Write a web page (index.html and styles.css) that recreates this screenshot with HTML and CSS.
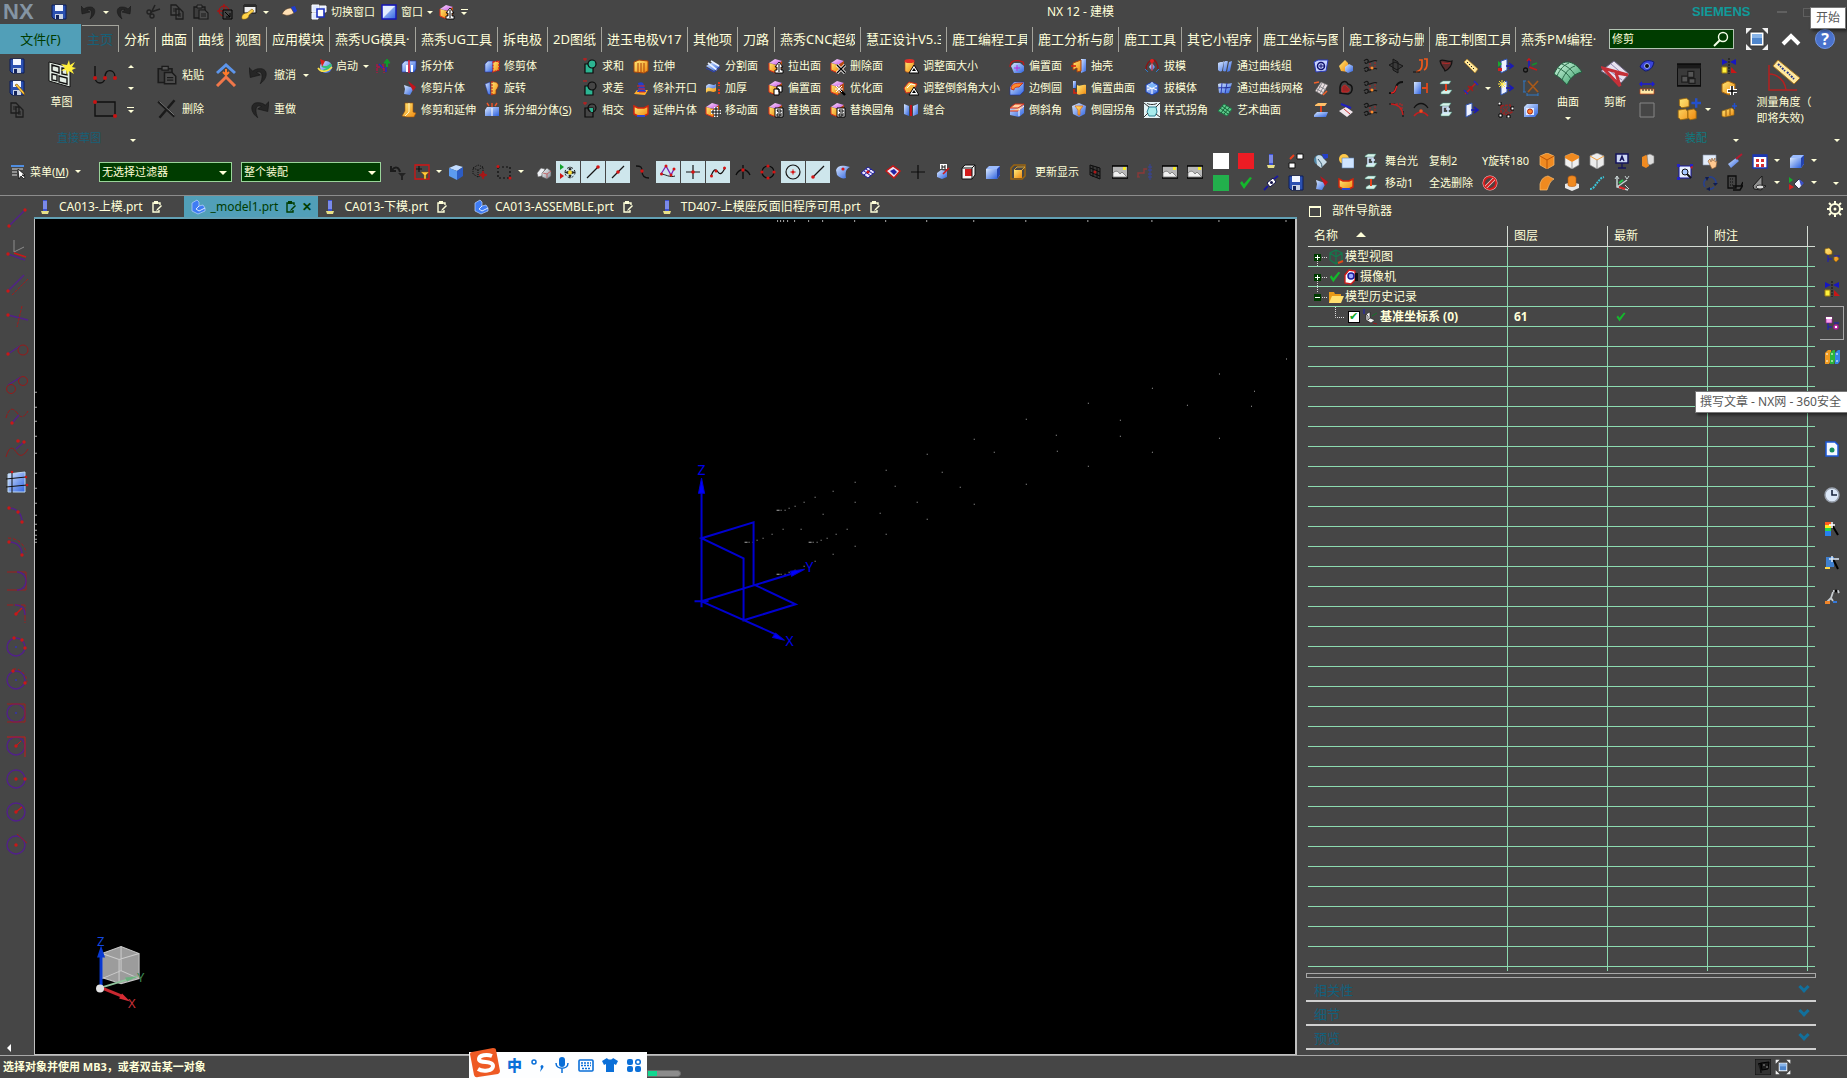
FILE: index.html
```html
<!DOCTYPE html>
<html lang="zh-CN">
<head>
    <meta charset="UTF-8">
    <meta name="viewport" content="width=device-width, initial-scale=1.0">
    <title>NX 12 - 建模</title>
    <link rel="stylesheet" href="styles.css">
</head>
<body>
    <!-- icones -->
    <svg class="defs" aria-hidden="true">
        <defs>
            <linearGradient id="gBlue" x1="0" y1="0" x2="1" y2="1"><stop offset="0" stop-color="#d8e8ff"/><stop offset="1" stop-color="#2e62e0"/></linearGradient>
            <linearGradient id="gGold" x1="0" y1="0" x2="1" y2="1"><stop offset="0" stop-color="#ffe978"/><stop offset="1" stop-color="#f08a10"/></linearGradient>
            <linearGradient id="gPink" x1="0" y1="0" x2="1" y2="1"><stop offset="0" stop-color="#ffe0ff"/><stop offset="1" stop-color="#c050e0"/></linearGradient>
            <linearGradient id="gGreen" x1="0" y1="0" x2="1" y2="1"><stop offset="0" stop-color="#d8fbe6"/><stop offset="1" stop-color="#2f9a62"/></linearGradient>
            <linearGradient id="gGray" x1="0" y1="0" x2="1" y2="1"><stop offset="0" stop-color="#ffffff"/><stop offset="1" stop-color="#7d8794"/></linearGradient>
        </defs>
        <symbol id="save" viewBox="0 0 16 16"><path d="M1 1h14v14H3l-2-2z" fill="#2b50b0" stroke="#0d1c58"/><path d="M4 1h8v6H4z" fill="#f2f6ff"/><path d="M4 10h8v5H4z" fill="#c8d2e4"/><path d="M5 11h3v4H5z" fill="#14245c"/></symbol>
        <symbol id="save-as" viewBox="0 0 16 16"><use href="#save"/><path d="M6 5l8 9 2 1-1-3-7-8z" fill="#ffc83c" stroke="#6b4300" stroke-width=".6"/></symbol>
        <symbol id="copy" viewBox="0 0 16 16"><path d="M2 1h5l3 3v7H2zM7 5h4l3 3v7H7z" fill="#484848" stroke="#1d1d1d" stroke-width="1.3"/><path d="M4 5h3M4 7h3M9 10h3M9 12h3" stroke="#1d1d1d"/></symbol>
        <symbol id="paste" viewBox="0 0 16 16"><path d="M1 3h11v11H1z" fill="#3d3d3d" stroke="#1b1b1b" stroke-width="1.3"/><path d="M4 1h5v3H4z" fill="#555" stroke="#1b1b1b"/><path d="M6 6h6l3 3v6H6z" fill="#4c4c4c" stroke="#1b1b1b" stroke-width="1.2"/><path d="M8 10h5M8 12h5" stroke="#1b1b1b"/></symbol>
        <symbol id="cross" viewBox="0 0 16 16"><path d="M1 2l13 12M14 1L2 15" stroke="#1a1a1a" stroke-width="2"/><path d="M2 2l12 11" stroke="#888" stroke-width=".7"/></symbol>
        <symbol id="cut" viewBox="0 0 16 16"><path d="M10 1L6 9M15 5L6 8" stroke="#222" stroke-width="1.6"/><circle cx="4" cy="8" r="2" fill="none" stroke="#222" stroke-width="1.4"/><circle cx="7" cy="12" r="2" fill="none" stroke="#222" stroke-width="1.4"/></symbol>
        <symbol id="undo" viewBox="0 0 16 16"><path d="M0 2l1 8 8-2-3-2c4-2 6 2 3 9 7-5 6-13-1-12-2 0-4 1-5 2z" fill="#262626" stroke="#161616" stroke-width=".5"/></symbol>
        <symbol id="redo" viewBox="0 0 16 16"><use href="#undo" transform="matrix(-1 0 0 1 16 0)"/></symbol>
        <symbol id="target" viewBox="0 0 16 16"><circle cx="7" cy="7" r="5" fill="none" stroke="#c00808"/><path d="M0 7h14M7 0v14" stroke="#c00808"/><path d="M6 6h9v9H6z" fill="#444" stroke="#000"/><path d="M8 8l5 5m0-4v4H9" stroke="#000" fill="none"/></symbol>
        <symbol id="key" viewBox="0 0 16 16"><path d="M3 1h12v8H3z" fill="#eee" stroke="#111"/><path d="M3 2h12" stroke="#2b2b2b" stroke-width="2"/><path d="M1 15c-1-4 2-6 5-6l5-4 2 2-5 4c0 3-3 5-7 4z" fill="#ffd348" stroke="#795000" stroke-width=".5"/></symbol>
        <symbol id="hand" viewBox="0 0 16 16"><path d="M1 10c2-4 5-6 9-6l3 5c-3 2-7 3-9 2z" fill="#ffe0b5" stroke="#5a4128" stroke-width=".6"/><path d="M10 3l4-1 2 5-3 2z" fill="#1f3ccb"/></symbol>
        <symbol id="switch-win" viewBox="0 0 16 16"><path d="M1 1h7v7H1zM9 2h6v6H9zM1 9h6v6H1z" fill="#dfe9ff" stroke="#fff"/><path d="M6 5h7v8H6z" fill="#fff" stroke="#1c30c0" stroke-width="1.6"/></symbol>
        <symbol id="window" viewBox="0 0 16 16"><path d="M1 1h14v14H1z" fill="url(#gBlue)" stroke="#1414b4" stroke-width="1.4"/><path d="M2 2h12L2 14z" fill="#e4eeff"/></symbol>
        <symbol id="cube" viewBox="0 0 16 16"><path d="M1 5l6-4 7 2-5 4z" fill="url(#gPink)"/><path d="M1 5l7 2v8l-7-3z" fill="url(#gGold)"/><path d="M8 7l6-4v8l-6 4z" fill="#b74a12"/><path d="M1 5v7l7 3" stroke="#e33018" fill="none"/></symbol>
        <symbol id="pull-face" viewBox="0 0 16 16"><use href="#cube"/><path d="M11 4l4 5h-2v3h2v3H7v-3h2V9H7z" fill="#fff" stroke="#000" stroke-width=".9"/><path d="M11 6v8" stroke="#000"/></symbol>
        <symbol id="move-face" viewBox="0 0 16 16"><use href="#cube"/><path d="M11 5v10M6 10h10" stroke="#fff" stroke-width="4"/><path d="M11 5v10M6 10h10M9 7h4M9 13h4M8 8v4M14 8v4" stroke="#000"/></symbol>
        <symbol id="offset-face" viewBox="0 0 16 16"><use href="#cube"/><path d="M6 9h5v6H6zM9 6h5v6h-3V9H9z" fill="#fff" stroke="#000"/></symbol>
        <symbol id="replace-face" viewBox="0 0 16 16"><use href="#cube"/><path d="M7 6h8v9H7z" fill="#fff" stroke="#000"/><path d="M9 8h4v2h-3zM9 12h3v2H9zM13 11v3" fill="none" stroke="#000"/></symbol>
        <symbol id="delete-face" viewBox="0 0 16 16"><use href="#cube"/><path d="M7 7l8 8M15 7l-8 8" stroke="#fff" stroke-width="3"/><path d="M7 7l8 8M15 7l-8 8" stroke="#000" stroke-width="1.4"/></symbol>
        <symbol id="opt-face" viewBox="0 0 16 16"><use href="#cube"/><path d="M8 8l7 7" stroke="#000" stroke-width="2.4"/><path d="M9 5v8M5 9h8M6 6l6 6M12 6l-6 6" stroke="#fff"/></symbol>
        <symbol id="size-face" viewBox="0 0 16 16"><path d="M2 3v10c2 2 7 2 9 0V3z" fill="url(#gGold)" stroke="#a43a10" stroke-width=".6"/><ellipse cx="6.500" cy="3" rx="5" ry="2" fill="#e33028"/><path d="M11 7l5 8H6z" fill="#fff" stroke="#000"/><path d="M11 10l2 3H9z" fill="#000"/></symbol>
        <symbol id="size-chamfer" viewBox="0 0 16 16"><path d="M1 8l5-6 8 2-4 8-7 1z" fill="url(#gGold)" stroke="#d12a18"/><path d="M4 8l4-4 4 1" stroke="#fff" fill="none"/><path d="M11 7l5 8H6z" fill="#fff" stroke="#000"/><path d="M11 10l2 3H9z" fill="#000"/></symbol>
        <symbol id="sketch" viewBox="0 0 28 28"><path d="M1 2l21 5v20L1 21z" fill="#e3ece4" stroke="#111"/><path d="M4 5l7 2v6l-7-2zM14 8l5 1v6l-5-1zM4 14l5 1v6l-5-1zM11 16l8 2v6l-8-2z" fill="none" stroke="#111" stroke-width="1.4"/><path d="M21 0l1 5 5-3-3 5 4 1-4 2 2 4-5-3-2 4-1-5-5 1 4-3-4-4 6 1z" fill="#ffef3a"/></symbol>
        <symbol id="curve" viewBox="0 0 24 24"><path d="M2 3v11c0 8 10 8 10 0 0-9 10-8 10 0" fill="none" stroke="#111" stroke-width="1.4"/><circle cx="2" cy="15" r="2" fill="#c81414"/><circle cx="12" cy="15" r="2" fill="#c81414"/><circle cx="22" cy="15" r="2" fill="#c81414"/></symbol>
        <symbol id="rect" viewBox="0 0 24 24"><path d="M2 5h20v14H2z" fill="none" stroke="#111" stroke-width="1.4"/><circle cx="2" cy="5" r="2" fill="#c81414"/><circle cx="22" cy="19" r="2" fill="#c81414"/></symbol>
        <symbol id="chevrons" viewBox="0 0 20 24"><path d="M1 10l9-8 9 8" fill="none" stroke="#5d95ea" stroke-width="3"/><path d="M1 23l9-9 9 9" fill="none" stroke="#f0774a" stroke-width="3"/><path d="M10 6v6M7 9l3 3 3-3" stroke="#ff7a2a" stroke-width="2" fill="none"/></symbol>
        <symbol id="globe" viewBox="0 0 16 16"><circle cx="9" cy="9" r="6" fill="url(#gBlue)"/><path d="M5 8c3 2 7 1 9-2M6 13c3-1 6-3 8-6" stroke="#36c274" stroke-width="2" fill="none"/><path d="M1 10c3 5 10 4 14-1" stroke="#ffe24a" fill="none" stroke-width="1.500"/><path d="M3 1l5 2-3 6z" fill="#d8201c"/></symbol>
        <symbol id="wcs-up" viewBox="0 0 16 16"><path d="M12 9V5" stroke="#11992b" stroke-width="2"/><path d="M9 5l3-4 3 4z" fill="#11992b" stroke="#11992b"/><path d="M2 6v9M2 9h7v6M8 6v5" stroke="#b01444" stroke-width="1.4" stroke-dasharray="3 1" fill="none"/><path d="M4 6l4 4M11 9v5" stroke="#2424d0" stroke-width="1.3"/></symbol>
        <symbol id="split-body" viewBox="0 0 16 16"><path d="M1 6l3-3h11v8l-2 3H1z" fill="url(#gBlue)" stroke="#2334a8" stroke-width=".6"/><path d="M5 7h2v7H5zM10 7h2v7h-2z" fill="#fff"/><path d="M8 2v13" stroke="#e51a30" stroke-width="1.6"/></symbol>
        <symbol id="trim-sheet" viewBox="0 0 16 16"><path d="M3 5l6 2 4 1-4 7-6-1 1-5z" fill="url(#gBlue)"/><path d="M7 1l8 6-3 4z" fill="#c0141c"/></symbol>
        <symbol id="trim-ext" viewBox="0 0 16 16"><path d="M4 1h8v9l3 1-2 4H6l-5-1 3-5z" fill="url(#gGold)" stroke="#9a5208" stroke-width=".6"/><path d="M8 1v9l-4 4" stroke="#fff7c8" fill="none"/></symbol>
        <symbol id="trim-body" viewBox="0 0 16 16"><path d="M1 6l3-3h5v9l-1 2H1z" fill="url(#gBlue)" stroke="#2334a8" stroke-width=".6"/><path d="M9 4l6-1v9l-6 2z" fill="url(#gGold)" stroke="#d41a18" stroke-width="1.2" stroke-dasharray="2 1"/></symbol>
        <symbol id="revolve" viewBox="0 0 16 16"><path d="M1 4l5-2 1 13-3-1z" fill="url(#gBlue)" stroke="#182b9b" stroke-width=".5"/><path d="M7 2c8-1 9 4 5 8v4l-5 1z" fill="url(#gGold)" stroke="#9a3008" stroke-width=".7"/><path d="M8 1v14" stroke="#c01818" stroke-dasharray="2 1"/></symbol>
        <symbol id="split-sub" viewBox="0 0 16 16"><path d="M1 8l2-3h12v9H1z" fill="url(#gBlue)"/><path d="M8 6v8" stroke="#fff"/><path d="M5 4L3 1M8 5V1M11 4l2-3" stroke="#f0562a" stroke-width="1.4"/></symbol>
        <symbol id="unite" viewBox="0 0 16 16"><path d="M3 6h8v9H3z" fill="#2cb592" stroke="#0b0b0b" stroke-width="1.2"/><circle cx="10" cy="6" r="4" fill="#2cb592" stroke="#0b0b0b" stroke-width="1.2"/><path d="M1 1h4M3 0v3" stroke="#d01818"/></symbol>
        <symbol id="subtract" viewBox="0 0 16 16"><path d="M3 6h8v9H3z" fill="#2cb592" stroke="#0b0b0b" stroke-width="1.2"/><circle cx="10" cy="6" r="4" fill="#464646" stroke="#0b0b0b" stroke-width="1.2"/><path d="M1 1h4" stroke="#d01818"/></symbol>
        <symbol id="intersect" viewBox="0 0 16 16"><path d="M3 6h8v9H3z" fill="none" stroke="#0b0b0b" stroke-width="1.2"/><circle cx="10" cy="6" r="4" fill="none" stroke="#0b0b0b" stroke-width="1.2"/><path d="M7 6h4v4H9z" fill="#2cb592"/><path d="M1 1h4M3 0v3" stroke="#d01818"/></symbol>
        <symbol id="extrude" viewBox="0 0 16 16"><path d="M1 4l5-2 9 1v10l-4 2-10-1z" fill="url(#gGold)" stroke="#a4420a"/><path d="M5 5v9M8 5v9M11 5v9" stroke="#a83e08"/></symbol>
        <symbol id="patch" viewBox="0 0 16 16"><path d="M1 14l3-4h11l-3 5z" fill="#ffae2e"/><path d="M5 3c4-2 6 0 6 3l2 6H4l2-5z" fill="#213fd0"/><path d="M4 6h8M5 9h7M6 12h6" stroke="#e22618"/></symbol>
        <symbol id="extend-sheet" viewBox="0 0 16 16"><path d="M1 4l4 2h6l4-2v8l-4 2H5l-4-2z" fill="url(#gGold)" stroke="#d2240e" stroke-width="1.4"/><path d="M4 14h8" stroke="#2b46ce" stroke-width="2"/></symbol>
        <symbol id="split-face" viewBox="0 0 16 16"><path d="M1 8l7-4 7 4-6 5z" fill="url(#gBlue)"/><path d="M3 5l9 7M6 3l8 5" stroke="#e7f0ff" stroke-width="1.600"/><path d="M1 10l8 4 6-5" stroke="#2840c0" fill="none"/></symbol>
        <symbol id="thicken" viewBox="0 0 16 16"><path d="M1 6c4-5 6 1 10-2v4c-4 3-6-2-10 2z" fill="url(#gBlue)"/><path d="M1 9c4-4 6 2 10-2v4c-4 3-6-2-10 2z" fill="url(#gGold)"/><path d="M14 2v4M14 9v5" stroke="#e33418" stroke-width="2" stroke-dasharray="2 1"/></symbol>
        <symbol id="sew" viewBox="0 0 16 16"><path d="M1 2l5 2v10l-5-2z" fill="url(#gBlue)"/><path d="M15 2l-5 2v10l5-2z" fill="url(#gBlue)"/><path d="M8 3v11" stroke="#c1131b" stroke-width="2"/></symbol>
        <symbol id="offset-blue" viewBox="0 0 16 16"><path d="M2 8l3-3h6l4 3v5l-3 2H5z" fill="url(#gBlue)"/><path d="M1 9c0-6 5-8 13-5l1 3" fill="none" stroke="#c01818" stroke-width="1.2"/><path d="M5 10h6M8 7v6" stroke="#b62ce0"/></symbol>
        <symbol id="edge-blend" viewBox="0 0 16 16"><path d="M1 7l4-5h10v9l-4 4H1z" fill="url(#gBlue)" stroke="#1d2f9c" stroke-width=".6"/><path d="M2 9c0-5 3-6 12-6l-4 4c-4 0-5 1-5 3z" fill="#ff8a2c" stroke="#c22010" stroke-width=".8"/></symbol>
        <symbol id="chamfer" viewBox="0 0 16 16"><path d="M1 6l5-4h9v9l-5 4-9-2z" fill="url(#gBlue)"/><path d="M1 6l5-4h9l-6 4zM1 9l8 0 6-5" fill="#ffd0a0" stroke="#d82c14"/><path d="M10 14V8l5-4" stroke="#fff" fill="none"/></symbol>
        <symbol id="shell" viewBox="0 0 16 16"><path d="M10 1h5v12l-5 2z" fill="url(#gBlue)"/><path d="M2 5l8-3v11l-4 1v-4l-4 2z" fill="url(#gGold)" stroke="#a43e10"/><path d="M0 8h5" stroke="#d8220e" stroke-width="1.6"/></symbol>
        <symbol id="offset-surf" viewBox="0 0 16 16"><path d="M6 5c3 2 5-1 9 0v9c-4-1-6 2-9 0z" fill="url(#gGold)"/><path d="M2 1h3v7H2z" fill="url(#gBlue)"/><path d="M3 9v4h3" stroke="#d8220e" fill="none" stroke-width="1.5"/></symbol>
        <symbol id="blend-corner" viewBox="0 0 16 16"><path d="M1 4l7-3 7 3-1 8-6 3-6-3z" fill="url(#gBlue)"/><path d="M4 4h8l-3 4v5H7V8z" fill="url(#gGold)" stroke="#e06410" stroke-width=".7"/></symbol>
        <symbol id="draft" viewBox="0 0 16 16"><path d="M2 12c0-7 4-10 7-10s5 5 5 9" fill="none" stroke="#8a1414" stroke-width="1.400"/><path d="M5 9l3-4 3 4-3 4z" fill="url(#gBlue)"/><path d="M8 1v12" stroke="#d81818"/><circle cx="8" cy="3" r="2" fill="#e02020"/><path d="M1 11l3 3M15 11l-3 3" stroke="#2b7cd0"/></symbol>
        <symbol id="draft-body" viewBox="0 0 16 16"><path d="M8 2l6 3v7l-6 3-6-3V5z" fill="url(#gBlue)" stroke="#1b3fae"/><path d="M8 2v12M3 6l10 4M13 6L3 10" stroke="#fff"/><path d="M4 6l4-3 4 3-4 2z" fill="#79b4f8"/></symbol>
        <symbol id="styled" viewBox="0 0 16 16"><path d="M0 0h16v16H0z" fill="#e6f4f6"/><path d="M5 5h7l1 5-2 4H5l-2-4z" fill="#a8ecec" stroke="#2b8092"/><path d="M0 1l5 4M16 1l-4 4M0 15l4-4M16 15l-4-3M3 1c1 2 9 2 10 0" stroke="#333" fill="none"/></symbol>
        <symbol id="thru" viewBox="0 0 16 16"><path d="M1 5c3-2 4 0 6-2l-2 10c-2 1-3 0-4-1zM7 4c2-2 3 0 4-1L9 13c-1 1-2 0-3 0zM12 4l3-1-2 10-3 1z" fill="url(#gBlue)"/></symbol>
        <symbol id="mesh" viewBox="0 0 16 16"><path d="M1 4c4-2 8 1 14-1l-3 10c-4 1-7-1-10 0z" fill="url(#gBlue)"/><path d="M5 3L4 14M10 3L8 14M1 8c4-1 8 1 13-1" stroke="#2a3ab0"/></symbol>
        <symbol id="art" viewBox="0 0 16 16"><path d="M1 9l6-7 8 5-5 7z" fill="#5fc98c" stroke="#1d7a46"/><path d="M3 6l8 6M5 4l8 6M4 11l6-8M7 12l6-7" stroke="#146036"/></symbol>
        <symbol id="surf-at" viewBox="0 0 16 16"><path d="M1 4l4-2 10 0-2 11-10 1z" fill="#c4d0ff" stroke="#2838b8"/><circle cx="8" cy="8" r="3.500" fill="none" stroke="#10106c" stroke-width="1.5"/><path d="M8 6v4M6 8h5" stroke="#10106c"/></symbol>
        <symbol id="solids" viewBox="0 0 16 16"><path d="M1 8l6-6 3 3v9l-7-1z" fill="url(#gGold)"/><path d="M7 9l4-3 4 2v5l-5 2-3-2z" fill="url(#gBlue)"/></symbol>
        <symbol id="scurve" viewBox="0 0 16 16"><path d="M1 3c3-3 5-1 4 1s-3 2-3 0M1 11c3-3 5-1 4 1s-3 2-3 0M5 4c3 1 6-3 9-1M5 12c3 1 6-3 9-1" fill="none" stroke="#161616" stroke-width="1.200"/><path d="M7 5v6M12 4v6" stroke="#b02020" stroke-dasharray="2 1"/><circle cx="9" cy="10" r="1.500" fill="#ff8c2c"/></symbol>
        <symbol id="planes" viewBox="0 0 16 16"><path d="M1 7l6-3 8 4-6 4zM5 1l5 3v11l-5-3z" fill="#3a3a3a" stroke="#161616"/></symbol>
        <symbol id="bends" viewBox="0 0 16 16"><path d="M6 2h3v5c0 4-2 6-6 7M11 1h3v5c0 4-1 5-3 6" fill="none" stroke="#f05a1c" stroke-width="1.7"/><path d="M0 14h7" stroke="#111"/></symbol>
        <symbol id="patch-red" viewBox="0 0 16 16"><path d="M2 3c3-3 7 2 12 0 0 5-3 8-7 10C6 9 3 9 2 3z" fill="#5b2d2d" stroke="#121212" stroke-width="1.200"/><path d="M4 5c3 0 5 1 8 0" stroke="#c02a2a"/></symbol>
        <symbol id="ruler" viewBox="0 0 16 16"><path d="M1 4l3-3 11 10-3 4z" fill="#ffe79a" stroke="#a87820" stroke-width=".7"/><path d="M5 4l-1 1M7 6L6 7M9 8l-1 1M11 10l-1 1" stroke="#222"/></symbol>
        <symbol id="grid-sheet" viewBox="0 0 16 16"><path d="M2 11L8 2l7 3-6 10z" fill="#eadfe0" stroke="#555" stroke-width=".6"/><path d="M4 9l7 4M6 6l7 4M9 3l-5 9M12 4l-5 9" stroke="#8a8a90"/><path d="M1 3l5-1M10 15l4-4" stroke="#f0602a" stroke-width="1.600"/></symbol>
        <symbol id="shape" viewBox="0 0 16 16"><path d="M2 13V7c1-6 6-7 8-3 6 1 5 9 0 10z" fill="none" stroke="#101010" stroke-width="1.500"/><path d="M4 12V8c1-3 4-4 5-1 3 1 3 5 0 5z" fill="#992626" stroke="#c82525"/></symbol>
        <symbol id="s-red" viewBox="0 0 16 16"><path d="M1 13c7 1 6-3 7-6 1-4 3-5 7-5" fill="none" stroke="#101010" stroke-width="1.800"/><path d="M3 13c5 0 4-4 6-7" fill="none" stroke="#e02424" stroke-width="1.500"/></symbol>
        <symbol id="tube" viewBox="0 0 16 16"><path d="M1 2h7v12H1z" fill="url(#gBlue)"/><path d="M14 3v10M9 8h5" stroke="#e0481c" stroke-width="1.800"/></symbol>
        <symbol id="ibeam" viewBox="0 0 16 16"><path d="M2 3l3-2h8l-2 3H2zM3 12l3-2h8l-3 4H3z" fill="#d8f3ea" stroke="#488c7c" stroke-width=".5"/><path d="M8 4v7" stroke="#e2401c" stroke-width="2"/></symbol>
        <symbol id="ibeam-g" viewBox="0 0 16 16"><path d="M2 3l3-2h8l-2 3H2zM3 12l3-2h8l-3 4H3z" fill="#d8f3ea" stroke="#488c7c" stroke-width=".5"/><path d="M5 5h5v6H5zM8 7h4" fill="none" stroke="#d4e8ff" stroke-width="1.500"/></symbol>
        <symbol id="measure" viewBox="0 0 16 16"><path d="M2 14L13 3" stroke="#c01c1c" stroke-width="1.500"/><path d="M1 10l4 4M11 1l4 4" stroke="#2424c0" stroke-width="1.500"/><path d="M5 6l5 5" stroke="#a01c1c" stroke-width="1.500"/><circle cx="8" cy="8" r="2" fill="#a01c1c"/></symbol>
        <symbol id="sweep" viewBox="0 0 16 16"><path d="M2 3l3-2h9l-2 3H2z" fill="#ffc068"/><path d="M8 4v6" stroke="#e2401c" stroke-width="2"/><path d="M1 13l3-3h11l-2 5H1z" fill="url(#gBlue)"/></symbol>
        <symbol id="sheet-line" viewBox="0 0 16 16"><path d="M1 9l7-4 7 5-6 5z" fill="#f0e6ec"/><path d="M3 2l10 4" stroke="#2020c0" stroke-width="2"/><path d="M6 7l6 5" stroke="#c83434"/></symbol>
        <symbol id="corner" viewBox="0 0 16 16"><path d="M1 2h6M15 9v6" stroke="#111" stroke-width="1.200"/><path d="M3 2c7 0 11 4 12 11" stroke="#c81e1e" fill="none" stroke-width="1.400"/><path d="M8 2h6v6" stroke="#c81e1e" stroke-dasharray="2 1" fill="none"/></symbol>
        <symbol id="arches" viewBox="0 0 16 16"><path d="M1 6c4-6 10-6 14 0" stroke="#111" fill="none" stroke-width="1.300"/><path d="M1 14c4-5 10-5 14 0" stroke="#c81e1e" fill="none" stroke-width="1.600"/><circle cx="8" cy="9" r="1.800" fill="#f05020"/></symbol>
        <symbol id="export" viewBox="0 0 16 16"><path d="M3 3l6-2v11l-6 3z" fill="#eef2ff" stroke="#3154b0"/><path d="M8 8h6M11 5l4 3-4 3" stroke="#1919b6" fill="none" stroke-width="1.500"/></symbol>
        <symbol id="export-g" viewBox="0 0 16 16"><use href="#export"/><path d="M0 3l4 3-4 3z" fill="#17a82e"/><path d="M0 10h4v3H0z" fill="#d42020"/></symbol>
        <symbol id="export-y" viewBox="0 0 16 16"><use href="#export"/><path d="M4 0v8M0 4h8M1 1l6 6M7 1L1 7" stroke="#ffe63c"/></symbol>
        <symbol id="csys" viewBox="0 0 16 16"><path d="M6 1v9" stroke="#1c1cc0" stroke-width="1.600"/><path d="M6 9l8 3M4 3l2-2 2 2" stroke="#c81818" fill="none" stroke-width="1.600"/><path d="M9 7l5-2" stroke="#14902a" stroke-width="1.600"/><circle cx="2.500" cy="12" r="2" fill="none" stroke="#111" stroke-width="1.300"/></symbol>
        <symbol id="dim-x" viewBox="0 0 16 16"><path d="M5 1l10 11M15 1L5 12" stroke="#a85a1a" stroke-width="1.700"/><path d="M1 1v11M0 1h3M0 12h3M4 15h11M4 13v3M15 13v3" stroke="#2f77c2"/></symbol>
        <symbol id="pts" viewBox="0 0 16 16"><path d="M3 4l9-1 2 7-6 3-5-3z" fill="none" stroke="#992424" stroke-width="1.600" stroke-dasharray="3 1"/><path d="M5 6l6 5M10 5l-4 6" stroke="#992424"/><path d="M0 0h3v3H0zM13 5h3v3h-3zM1 12h3v3H1zM9 13h3v3H9z" fill="#fff" stroke="#000"/></symbol>
        <symbol id="box-hole" viewBox="0 0 16 16"><path d="M1 5l3-3h11v9l-3 4H1z" fill="url(#gBlue)"/><path d="M3 6h8v7H3z" fill="#dfeaff"/><circle cx="7" cy="9.500" r="2.500" fill="#ff8430" stroke="#b02410"/></symbol>
        <symbol id="surface" viewBox="0 0 28 26"><path d="M0 13C4 4 9 1 13 1c6 0 11 4 15 10-5 1-11 4-15 13-4-5-8-8-13-11z" fill="url(#gGreen)" stroke="#215b3d"/><path d="M4 7c5 2 10 6 13 11M8 3c5 2 10 6 13 11M3 15c3-7 7-11 12-13M8 19c3-7 7-12 13-14" stroke="#2a6b49" fill="none"/></symbol>
        <symbol id="snip" viewBox="0 0 28 28"><path d="M0 11L13 1l15 13-8 9z" fill="#e7e1f0" stroke="#6c6683"/><path d="M5 8l16 12M10 4l14 12" stroke="#9188b4"/><path d="M2 8l17 18-4-13 12 2z" fill="none" stroke="#c43038" stroke-width="3"/></symbol>
        <symbol id="ring" viewBox="0 0 16 16"><path d="M1 9c2-6 8-8 14-5-1 6-5 9-9 9z" fill="#3a44d8" stroke="#111a70"/><circle cx="8" cy="8" r="2.500" fill="#111" stroke="#9ab0ff"/></symbol>
        <symbol id="ruler-h" viewBox="0 0 16 16"><path d="M1 4h14M3 2L1 4l2 2M13 2l2 2-2 2" stroke="#1b1bd4" fill="none" stroke-width="1.400"/><path d="M1 9h14v5H1z" fill="#ffe9a8" stroke="#c04418" stroke-width=".7"/><path d="M4 9v2M7 9v2M10 9v2M13 9v2" stroke="#111"/></symbol>
        <symbol id="blank" viewBox="0 0 16 16"><path d="M1 1h14v14H1z" fill="none" stroke="#858585"/></symbol>
        <symbol id="asm-dark" viewBox="0 0 20 20"><path d="M0 1h20v18H0z" fill="#3a3a3a" stroke="#0c0c0c" stroke-width="1.500"/><path d="M0 3h20" stroke="#1a1a1a" stroke-width="3"/><path d="M4 11h5v5H4zM9 7h5v5H9zM10 13h5v4h-5z" fill="#555" stroke="#1d1d1d"/></symbol>
        <symbol id="asm-add" viewBox="0 0 20 20"><path d="M2 2l6-1 2 2v5L4 9 2 7zM1 11l6-1 2 2v6l-6 1-2-2zM9 11l5-1 2 2v6l-5 1-2-2z" fill="url(#gGold)" stroke="#9e6a0b" stroke-width=".7"/><path d="M12 5h8M16 1v8" stroke="#2350cc" stroke-width="2"/></symbol>
        <symbol id="mate" viewBox="0 0 16 16"><path d="M1 1l6 3-6 3zM15 1L9 4l6 3z" fill="#1616c4"/><path d="M8 0v16" stroke="#111" stroke-dasharray="2 1"/><path d="M1 9h5v6H1z" fill="#fff23c" stroke="#a08010"/><path d="M10 9l6 6h-6z" fill="#c81616"/></symbol>
        <symbol id="asm-move" viewBox="0 0 16 16"><path d="M1 4l6-3 7 3v7l-6 4-7-3z" fill="url(#gGold)" stroke="#a26410"/><path d="M11 6v9M6 11h10" stroke="#fff" stroke-width="4"/><path d="M11 6v9M7 11h9" stroke="#000" stroke-width="1.500"/></symbol>
        <symbol id="asm-pat" viewBox="0 0 16 16"><path d="M1 9l10-3 2 2v5L3 15l-2-1z" fill="url(#gGold)" stroke="#9e6a0b" stroke-width=".7"/><path d="M5 8v6M9 7v6" stroke="#8a5208"/><path d="M11 4h5M13.500 1v6" stroke="#2350cc" stroke-width="1.500"/></symbol>
        <symbol id="angle" viewBox="0 0 32 32"><path d="M1 6v25h28" fill="none" stroke="#b42020" stroke-width="1.500"/><path d="M1 15c9 0 16 7 17 16" fill="none" stroke="#b42020" stroke-width="1.500"/><path d="M10 1L5 7l21 18 6-6z" fill="#ffe9a0" stroke="#a87820"/><path d="M10 5l3 3M14 9l3 3M19 13l3 3M23 17l3 3" stroke="#24348c" stroke-width="2" stroke-dasharray="2 1"/></symbol>
        <symbol id="menu" viewBox="0 0 16 16"><path d="M1 2h13" stroke="#4f8de0" stroke-width="2"/><path d="M2 5h11M2 8h5M2 11h5" stroke="#ddd"/><path d="M8 5l1 10 2-3 3 3 1-2-3-2h3z" fill="#fff" stroke="#000" stroke-width=".7"/></symbol>
        <symbol id="filter-off" viewBox="0 0 16 16"><path d="M1 2v5h5M2 6c3-4 7-3 8 2" fill="none" stroke="#1c1c1c" stroke-width="2"/><path d="M8 9h8l-3 3v4h-2v-4z" fill="#222"/></symbol>
        <symbol id="filter-on" viewBox="0 0 16 16"><path d="M1 1h14v14H1z" fill="none" stroke="#d21414" stroke-width="1.300"/><path d="M5 2v6M2 5h6" stroke="#111" stroke-width="1.200"/><path d="M7 8h8l-3 3v4h-2v-4z" fill="#ffca3c" stroke="#8a5a08" stroke-width=".5"/></symbol>
        <symbol id="bcube" viewBox="0 0 16 16"><path d="M1 4l7-3 7 2-6 4z" fill="#c2dcff"/><path d="M1 4l8 3v9l-8-4z" fill="#5c9bf0"/><path d="M9 7l6-4v9l-6 4z" fill="#2c5cc4"/></symbol>
        <symbol id="dot-cube" viewBox="0 0 16 16"><path d="M1 4l5-3 5 2v7l-5 3-5-3zM1 4l5 2 5-3M6 6v7" fill="none" stroke="#111" stroke-dasharray="1 1"/><path d="M11 7v8M7 11h8" stroke="#b01414" stroke-width="1.500"/><circle cx="11" cy="11" r="2" fill="none" stroke="#b01414"/></symbol>
        <symbol id="dot-rect" viewBox="0 0 16 16"><path d="M2 3h12v11H2z" fill="none" stroke="#0c0c0c" stroke-width="1.200" stroke-dasharray="2 2"/><circle cx="2" cy="2.500" r="1.500" fill="#d01414"/><circle cx="14" cy="14" r="1.500" fill="#d01414"/></symbol>
        <symbol id="boxes" viewBox="0 0 16 16"><path d="M1 9l4-5 4 1-3 7-4 1z" fill="#eef0f4" stroke="#555" stroke-width=".6"/><path d="M6 9l5-5 4 3v5l-4 3-5-2z" fill="url(#gGray)" stroke="#555" stroke-width=".6"/><path d="M7 9l4 1 4-3M11 10v4" stroke="#c04040" stroke-width=".7" fill="none"/></symbol>
        <symbol id="snap" viewBox="0 0 16 16"><path d="M0 0l4 3-4 3z" fill="#12a02c"/><path d="M0 9l4 3-4 3z" fill="#d21414"/><path d="M10 2l1.500 4h-3zM10 15l1.500-4h-3zM4 8.500L8 7v3zM16 8.500L12 7v3z" fill="#222"/><circle cx="10" cy="8.500" r="2" fill="#ffe33c" stroke="#887000" stroke-width=".5"/><circle cx="10" cy="8.500" r="5" fill="none" stroke="#111" stroke-dasharray="2 2"/></symbol>
        <symbol id="end-pt" viewBox="0 0 16 16"><path d="M2 14L13 3" stroke="#161616" stroke-width="1.200"/><circle cx="13" cy="3" r="1.800" fill="#d41414"/></symbol>
        <symbol id="mid-pt" viewBox="0 0 16 16"><path d="M2 14L14 2" stroke="#161616" stroke-width="1.200"/><circle cx="8" cy="8" r="1.800" fill="#d41414"/></symbol>
        <symbol id="low-pt" viewBox="0 0 16 16"><path d="M3 13L14 2" stroke="#161616" stroke-width="1.200"/><circle cx="3" cy="13" r="1.800" fill="#d41414"/></symbol>
        <symbol id="s-pt" viewBox="0 0 16 16"><path d="M1 2c5 0 6 1 6 5 0 5 3 7 7 7" fill="none" stroke="#111" stroke-width="1.300"/><circle cx="7" cy="7" r="1.700" fill="#d41414"/></symbol>
        <symbol id="poles" viewBox="0 0 16 16"><path d="M1 10L6 2l5 9 3-6" fill="none" stroke="#7a22b8" stroke-width="1.300"/><path d="M1 10c4 0 9 4 14 2" stroke="#222" fill="none"/><circle cx="1.500" cy="10" r="1.500" fill="#d41414"/><circle cx="6" cy="2" r="1.500" fill="#d41414"/><circle cx="11" cy="11" r="1.500" fill="#d41414"/><circle cx="14" cy="5" r="1.500" fill="#d41414"/></symbol>
        <symbol id="plus-pt" viewBox="0 0 16 16"><path d="M8 1v14M1 8h14" stroke="#161616" stroke-width="1.200"/><circle cx="8" cy="8" r="1.800" fill="#d41414"/></symbol>
        <symbol id="plus" viewBox="0 0 16 16"><path d="M8 1v14M1 8h14" stroke="#0c0c0c" stroke-width="1.200"/></symbol>
        <symbol id="wave" viewBox="0 0 16 16"><path d="M1 12c3-8 5-7 7-4s4 2 7-4" fill="none" stroke="#111" stroke-width="1.200"/><circle cx="1.500" cy="12" r="1.500" fill="#d41414"/><circle cx="6" cy="7" r="1.500" fill="#d41414"/><circle cx="14.500" cy="4" r="1.500" fill="#d41414"/></symbol>
        <symbol id="tangent" viewBox="0 0 16 16"><path d="M1 11c3-7 11-7 14 0M8 1v14" fill="none" stroke="#0c0c0c" stroke-width="1.300"/><circle cx="8" cy="6" r="1.700" fill="#d41414"/></symbol>
        <symbol id="quad" viewBox="0 0 16 16"><circle cx="8" cy="8" r="6" fill="none" stroke="#0c0c0c" stroke-width="1.200"/><circle cx="8" cy="2" r="1.600" fill="#d41414"/><circle cx="8" cy="14" r="1.600" fill="#d41414"/><circle cx="2" cy="8" r="1.600" fill="#d41414"/><circle cx="14" cy="8" r="1.600" fill="#d41414"/></symbol>
        <symbol id="centre" viewBox="0 0 16 16"><circle cx="8" cy="8" r="7" fill="none" stroke="#161616" stroke-width="1.200"/><circle cx="8" cy="8" r="1.600" fill="#d41414"/><path d="M5 8h6M8 5v6" stroke="#d41414" stroke-width=".6"/></symbol>
        <symbol id="face-pt" viewBox="0 0 16 16"><path d="M1 6c2-5 6-5 14-3-4 2-5 5-4 11-3 1-6 0-9-3z" fill="url(#gBlue)"/><circle cx="8" cy="5" r="1.600" fill="#d41414"/></symbol>
        <symbol id="mesh-pt" viewBox="0 0 16 16"><path d="M1 9l7-6 7 5-7 6z" fill="#e4e0ff" stroke="#1c1c98"/><path d="M4 7l7 5M6 5l7 5M4 11l7-6" stroke="#1c1c98"/><circle cx="8" cy="8" r="1.600" fill="#d41414"/></symbol>
        <symbol id="bound" viewBox="0 0 16 16"><path d="M1 7l7-5 7 5-6 7z" fill="#f0e6f4" stroke="#c81616" stroke-width="1.500"/><path d="M5 7l4-2 3 3-3 3z" fill="#2424a4"/></symbol>
        <symbol id="h-box" viewBox="0 0 16 16"><path d="M5 0h7v5H5z" fill="#fff"/><path d="M7 1v4M10 1v4M7 3h3" stroke="#111"/><path d="M2 9l4-3 6 1v6l-5 2-5-2z" fill="url(#gBlue)"/><path d="M8 10l6-6" stroke="#d01818" stroke-width="1.600"/></symbol>
        <symbol id="red-cube" viewBox="0 0 16 16"><path d="M2 4l3-3h10v10l-3 4H2z" fill="#f4f4f4" stroke="#111"/><path d="M5 5h7v7H5z" fill="#d21c1c"/><path d="M2 4h10v11M12 4l3-3" fill="none" stroke="#111"/></symbol>
        <symbol id="blue-box" viewBox="0 0 16 16"><path d="M1 5l3-3h11v9l-3 4H1z" fill="#9bbcff"/><path d="M1 5h11v10H1z" fill="url(#gBlue)"/><path d="M12 5l3-3v9l-3 4z" fill="#2443ac"/></symbol>
        <symbol id="gold-box" viewBox="0 0 16 16"><path d="M1 4l3-3h11v11l-3 3H1z" fill="none" stroke="#9a6410" stroke-width="1.500"/><path d="M4 6h8v8H4z" fill="url(#gGold)"/><path d="M4 6l3-3h8M12 6l3-3" stroke="#d8a030" fill="none"/></symbol>
        <symbol id="dark-grid" viewBox="0 0 16 16"><path d="M3 1l10 3v11L3 11zM3 4l10 4M3 8l10 4M6 2v11M10 3v11" fill="#3a3a3a" stroke="#0c0c0c"/><circle cx="8" cy="8" r="1.500" fill="#b01818"/></symbol>
        <symbol id="image" viewBox="0 0 16 16"><path d="M0 2h16v12H0z" fill="#b8b8b8" stroke="#000" stroke-width="1.500"/><path d="M1 13V9c3-3 5-2 7 1l2-2 5 5z" fill="#f0f0f0" stroke="#666" stroke-width=".7"/><path d="M11 3h3v3h-3z" fill="#f8ee28"/></symbol>
        <symbol id="dim-line" viewBox="0 0 16 16"><path d="M1 13V9h6V5h3" fill="none" stroke="#8c3838" stroke-width="1.400"/><path d="M0 13h3" stroke="#8c3838"/><path d="M13 0v16M11 3h4M11 6h4M11 10h4M11 13h4" stroke="#3a4488" stroke-width="1.300"/></symbol>
        <symbol id="bolt" viewBox="0 0 16 16"><path d="M6 1h4v11H6z" fill="#3c50d4"/><path d="M6 3h4M6 5h4M6 7h4M6 9h4" stroke="#b8c4ff"/><path d="M4 12h8l-1 3H5z" fill="#e8e088"/></symbol>
        <symbol id="squares" viewBox="0 0 16 16"><path d="M9 1h6v5H9zM1 10h6v5H1z" fill="#fff" stroke="#111"/><path d="M2 6l4-4" stroke="#f0401c" stroke-width="2"/></symbol>
        <symbol id="person" viewBox="0 0 16 16"><circle cx="6" cy="7" r="5" fill="#5088a8"/><path d="M3 4c2-3 6-2 7 1l4 4-6 6-4-3z" fill="#c8dce8"/><path d="M5 6c2 3 4 4 4 8" stroke="#35566c" fill="none"/><path d="M9 1h6v4l-4 1z" fill="#2440c8"/></symbol>
        <symbol id="overlap" viewBox="0 0 16 16"><circle cx="6" cy="6" r="5" fill="#ffc848"/><path d="M4 5h12v10H4z" fill="#cfe4ff" stroke="#5a82b0" stroke-width=".6"/></symbol>
        <symbol id="tick" viewBox="0 0 16 16"><path d="M2 8l4 6L14 3l-2-1-6 7-2-3z" fill="#14b82c"/></symbol>
        <symbol id="link" viewBox="0 0 16 16"><path d="M4 8l6-5 3 4-6 5z" fill="#fff" stroke="#101048"/><path d="M1 15l4-4M11 4l4-3" stroke="#1a1a9c" stroke-width="2"/><circle cx="8.500" cy="7.500" r="1.500" fill="#101048"/></symbol>
        <symbol id="stop" viewBox="0 0 16 16"><circle cx="8" cy="8" r="7.500" fill="#ffc4c4"/><circle cx="8" cy="8" r="6" fill="#504040" stroke="#d41c1c" stroke-width="2"/><path d="M4 12l8-8" stroke="#ffc4c4" stroke-width="3.500"/><path d="M4 12l8-8" stroke="#d41c1c" stroke-width="2"/></symbol>
        <symbol id="ocube" viewBox="0 0 16 16"><path d="M8 0l7 3v9l-7 4-7-4V3z" fill="#f08a20" stroke="#ffc070" stroke-width=".7"/><path d="M1 3l7 4 7-4M8 7v9" stroke="#b85408" fill="none"/></symbol>
        <symbol id="ocube-top" viewBox="0 0 16 16"><path d="M8 0l7 3v9l-7 4-7-4V3z" fill="#f0f0f0" stroke="#888" stroke-width=".7"/><path d="M8 0l7 3v2L8 9 1 5V3z" fill="#f08a20"/><path d="M8 9v7" stroke="#999"/></symbol>
        <symbol id="wcube" viewBox="0 0 16 16"><path d="M8 0l7 3v9l-7 4-7-4V3z" fill="#ececec" stroke="#888" stroke-width=".7"/><path d="M1 3l7 4 7-4" stroke="#f0a040" fill="none"/><path d="M8 7v9" stroke="#888"/></symbol>
        <symbol id="board" viewBox="0 0 16 16"><path d="M2 1h12v9H2z" fill="#ccd6f4" stroke="#14145c" stroke-width="1.500"/><path d="M6 8l2-5 2 5M7 6h2M8 10v5M4 15h8" fill="none" stroke="#14145c" stroke-width="1.300"/></symbol>
        <symbol id="opair" viewBox="0 0 16 16"><path d="M3 4l4-2 3 2v9l-3 2-4-2z" fill="#f08a20"/><path d="M8 2l3-1 4 2v7l-4 2-2-1z" fill="#ddd" stroke="#777" stroke-width=".6"/></symbol>
        <symbol id="osheet" viewBox="0 0 16 16"><path d="M1 9c2-6 4-7 8-8l6 3c-4 2-5 6-7 11H1z" fill="#f08a20" stroke="#ffc070" stroke-width=".7"/></symbol>
        <symbol id="opad" viewBox="0 0 16 16"><path d="M1 9l7-2 7 2v4l-7 3-7-3z" fill="#e8e8e8"/><path d="M4 3c0-3 8-3 8 0v7c0 2-8 2-8 0z" fill="#f08a20" stroke="#b85a10" stroke-width=".6"/></symbol>
        <symbol id="spline" viewBox="0 0 16 16"><path d="M1 14c4 0 5-4 7-6s3-5 7-6" fill="none" stroke="#3cc4d8" stroke-width="2" stroke-dasharray="2 1"/></symbol>
        <symbol id="axes" viewBox="0 0 16 16"><path d="M3 1v11l11 3M3 12l10-7" fill="none" stroke="#c8d4d4" stroke-width="1.500"/><path d="M1 4l2-3 2 3M11 1l2 3 2-3M11 10l4 4" stroke="#c8d4d4" fill="none"/><path d="M5 8l4-3" stroke="#1ec84c" stroke-width="2"/><path d="M5 12l6 2" stroke="#d82828" stroke-width="2"/></symbol>
        <symbol id="fit" viewBox="0 0 16 16"><path d="M2 2h12v12H2z" fill="#e8f0ff" stroke="#16169c"/><circle cx="8" cy="8" r="3" fill="#a8c8ff" stroke="#111"/><path d="M10 10l4 4" stroke="#111" stroke-width="2"/><path d="M0 0h3v3H0zM13 0h3v3h-3zM0 13h3v3H0z" fill="#2424c4"/><path d="M13 3l3-1-1 3z" fill="#d01818"/></symbol>
        <symbol id="grab" viewBox="0 0 16 16"><path d="M1 2h13v10H1z" fill="#e2ecfa" stroke="#8a98b0" stroke-width=".6"/><path d="M6 8l2-2 1 3 1-4 1 3 2-3 0 4 2-1-1 6-4 2z" fill="#ffc890" stroke="#8c5a30" stroke-width=".6"/></symbol>
        <symbol id="probe" viewBox="0 0 16 16"><path d="M1 11l8-6 3 3-8 7z" fill="url(#gBlue)"/><path d="M9 6l6-5" stroke="#b01c30" stroke-width="2"/></symbol>
        <symbol id="table" viewBox="0 0 16 16"><path d="M1 2h14v13H1z" fill="#fff" stroke="#1b37b4" stroke-width="1.300"/><path d="M1 3h14" stroke="#1b37b4" stroke-width="2"/><path d="M4 6h3v3H4zM9 6h3v3H9zM4 11h3v3H4zM9 11h3v3H9z" fill="#d83030"/></symbol>
        <symbol id="rotate" viewBox="0 0 16 16"><path d="M3 12a6 6 0 0 1 1-8M7 2a6 6 0 0 1 7 6M12 12a6 6 0 0 1-6 2" fill="none" stroke="#27408e" stroke-width="1.800"/><path d="M3 2l4 0-2 4zM11 8h5l-3 3zM4 14l4-2v4z" fill="#101c50"/></symbol>
        <symbol id="calc" viewBox="0 0 16 16"><path d="M1 1h8v12H1z" fill="#444" stroke="#0c0c0c" stroke-width="1.300"/><path d="M3 4h4M3 7h4M3 10h4" stroke="#0c0c0c" stroke-dasharray="1 1"/><path d="M6 11h8l2-4M6 15h7l3-5" fill="none" stroke="#0c0c0c" stroke-width="1.500"/></symbol>
        <symbol id="clip-gray" viewBox="0 0 16 16"><path d="M1 11L10 1v9l4 1-5 4-7-1z" fill="#909090" stroke="#1a1a1a"/><ellipse cx="8" cy="12" rx="4" ry="2" fill="#ddd" stroke="#333"/></symbol>
        <symbol id="play-box" viewBox="0 0 16 16"><path d="M0 2l4 3-4 3z" fill="#17a82e"/><path d="M0 9l5 3-5 3z" fill="#d42020"/><path d="M5 9l5-5 5 4-5 6z" fill="#f4f4ff" stroke="#334"/><path d="M10 4l5 4-3 3z" fill="#3c50c4"/></symbol>
        <symbol id="search" viewBox="0 0 16 16"><circle cx="10" cy="6" r="4.500" fill="none" stroke="#f4ffe8" stroke-width="1.400"/><path d="M7 9l-6 6" stroke="#f4ffe8" stroke-width="2"/></symbol>
        <symbol id="full" viewBox="0 0 24 24"><path d="M1 7V1h6zM17 1h6v6zM1 17v6h6zM23 17v6h-6z" fill="#f0f0f0"/><path d="M5 5h14v14H5z" fill="#fff" stroke="#333"/><path d="M7 7h10v10H7z" fill="#4f86cc"/><path d="M7 7h10v4H7z" fill="#88b4e8"/></symbol>
        <symbol id="up" viewBox="0 0 20 14"><path d="M2 12l8-8 8 8" fill="none" stroke="#fff" stroke-width="4"/></symbol>
        <symbol id="gear" viewBox="0 0 16 16"><circle cx="8" cy="8" r="5" fill="none" stroke="#ffffe0" stroke-width="2"/><path d="M8 0v3M8 13v3M0 8h3M13 8h3M2 2l2 2M12 12l2 2M14 2l-2 2M4 12l-2 2" stroke="#ffffe0" stroke-width="2"/><circle cx="8" cy="8" r="1.500" fill="#ffffe0"/></symbol>
        <symbol id="edited" viewBox="0 0 12 12"><path d="M9 4V2H2v9h6V9" fill="none" stroke="currentColor" stroke-width="1.400"/><path d="M3 0h4v3H3z" fill="currentColor"/><path d="M11 5L7 9l-2 1 1-2 4-4z" fill="currentColor"/></symbol>
        <symbol id="part" viewBox="0 0 16 16"><path d="M2 4l5-3 2 2v4l4-1 2 3v3l-7 3-6-3z" fill="#3f7cf4" stroke="#bcd4ff" stroke-width=".7"/><path d="M9 7l-3 3 3 2 6-3" stroke="#dbe9ff" fill="none"/></symbol>
        <!-- barra de curvas -->
        <symbol id="c-line" viewBox="0 0 24 24"><path d="M4 20L20 4" stroke="#51208a" stroke-width="1.400"/><circle cx="4" cy="20" r="1.700" fill="#c81818"/><circle cx="20" cy="4" r="1.700" fill="#c81818"/></symbol>
        <symbol id="c-axis" viewBox="0 0 24 24"><path d="M9 1v12l10-5" stroke="#8c8c8c" fill="none"/><path d="M3 15l17 6" stroke="#51208a" stroke-width="1.400"/><path d="M9 14l12 4" stroke="#c81818" stroke-width="1.600"/><circle cx="3" cy="15" r="1.700" fill="#c81818"/></symbol>
        <symbol id="c-par" viewBox="0 0 24 24"><path d="M3 19L19 3" stroke="#51208a" stroke-width="1.400"/><path d="M7 23L23 7" stroke="#a01c1c" stroke-dasharray="3 1"/><circle cx="3" cy="19" r="1.700" fill="#c81818"/></symbol>
        <symbol id="c-perp" viewBox="0 0 24 24"><path d="M3 10l20 5" stroke="#51208a" stroke-width="1.300"/><path d="M17 1l-5 21" stroke="#a01c1c" stroke-dasharray="3 1"/><circle cx="3" cy="10" r="1.700" fill="#c81818"/></symbol>
        <symbol id="c-tan" viewBox="0 0 24 24"><path d="M3 16l12-8" stroke="#51208a" stroke-width="1.300"/><circle cx="18" cy="12" r="5" fill="none" stroke="#961a1a"/><circle cx="3" cy="16" r="1.700" fill="#c81818"/></symbol>
        <symbol id="c-tan2" viewBox="0 0 24 24"><path d="M3 14L16 6" stroke="#51208a" stroke-width="1.300"/><circle cx="18" cy="10" r="4.500" fill="none" stroke="#961a1a"/><circle cx="6" cy="18" r="4.500" fill="none" stroke="#961a1a"/></symbol>
        <symbol id="c-wave" viewBox="0 0 24 24"><path d="M1 14c4-14 9-8 12-4s6 4 10-3" fill="none" stroke="#961a1a" stroke-dasharray="4 1"/><path d="M7 19l7-8" stroke="#51208a" stroke-width="1.400"/><circle cx="7" cy="19" r="1.700" fill="#c81818"/></symbol>
        <symbol id="c-wave2" viewBox="0 0 24 24"><path d="M1 20c4-14 8-8 11-4s7 3 11-4" fill="none" stroke="#961a1a"/><path d="M11 12l8-7" stroke="#51208a" stroke-width="1.400"/><circle cx="13" cy="4" r="1.800" fill="#c81818"/><circle cx="19" cy="5" r="1.700" fill="#c81818"/></symbol>
        <symbol id="c-net" viewBox="0 0 24 24"><path d="M3 4l17-2v20H3z" fill="url(#gBlue)" stroke="#bcd8f4"/><path d="M7 1v22M1 9l20-2M1 17l21-2" stroke="#111"/><circle cx="7" cy="2" r="1.300" fill="#c81818"/><circle cx="21" cy="7" r="1.300" fill="#c81818"/><circle cx="22" cy="15" r="1.300" fill="#c81818"/></symbol>
        <symbol id="c-arc" viewBox="0 0 24 24"><path d="M4 5c8 0 13 6 13 14" fill="none" stroke="#51208a" stroke-width="1.400"/><circle cx="4" cy="5" r="1.700" fill="#c81818"/><circle cx="13" cy="9" r="1.700" fill="#c81818"/><circle cx="17" cy="19" r="1.700" fill="#c81818"/></symbol>
        <symbol id="c-arc2" viewBox="0 0 24 24"><path d="M4 6c8 0 13 5 13 13" fill="none" stroke="#51208a" stroke-width="1.400"/><path d="M3 2c9 0 17 6 18 15" fill="none" stroke="#a01c1c" stroke-dasharray="3 2"/><circle cx="4" cy="6" r="1.700" fill="#c81818"/><circle cx="17" cy="19" r="1.700" fill="#c81818"/></symbol>
        <symbol id="c-u" viewBox="0 0 24 24"><path d="M2 3h19v18H2" fill="none" stroke="#a01c1c"/><path d="M12 3c12 0 12 18 0 18" fill="none" stroke="#51208a" stroke-width="1.400"/></symbol>
        <symbol id="c-fil" viewBox="0 0 24 24"><path d="M2 3h18v18" fill="none" stroke="#a01c1c" stroke-dasharray="6 1"/><path d="M10 3c7 0 10 4 10 10" fill="none" stroke="#51208a" stroke-width="1.400"/><path d="M11 12l6-6" stroke="#c81818" stroke-width="1.400"/><circle cx="11" cy="12" r="1.700" fill="#c81818"/></symbol>
        <symbol id="c-circ" viewBox="0 0 24 24"><circle cx="11" cy="12" r="9" fill="none" stroke="#51208a" stroke-width="1.400"/></symbol>
        <symbol id="c-3pt" viewBox="0 0 24 24"><use href="#c-circ"/><circle cx="11" cy="12" r="1" fill="#3434b0"/><circle cx="9" cy="3" r="1.700" fill="#c81818"/><circle cx="17" cy="5" r="1.700" fill="#c81818"/><circle cx="20" cy="13" r="1.700" fill="#c81818"/></symbol>
        <symbol id="c-2pt" viewBox="0 0 24 24"><use href="#c-circ"/><path d="M8 1c9-1 14 7 14 13" fill="none" stroke="#a01c1c" stroke-dasharray="3 2"/><circle cx="11" cy="12" r="1" fill="#3434b0"/><circle cx="8" cy="3" r="1.700" fill="#c81818"/><circle cx="20" cy="15" r="1.700" fill="#c81818"/></symbol>
        <symbol id="c-3tan" viewBox="0 0 24 24"><use href="#c-circ"/><path d="M2 3h18v18H2" fill="none" stroke="#a01c1c"/><circle cx="11" cy="12" r="1" fill="#3434b0"/></symbol>
        <symbol id="c-2tan" viewBox="0 0 24 24"><use href="#c-circ"/><path d="M2 3h18v20M11 12l5-5" fill="none" stroke="#c81818"/><circle cx="11" cy="12" r="1.700" fill="#c81818"/></symbol>
        <symbol id="c-cpt" viewBox="0 0 24 24"><use href="#c-circ"/><circle cx="11" cy="12" r="1.700" fill="#c81818"/><circle cx="20" cy="12" r="1.700" fill="#c81818"/></symbol>
        <symbol id="c-rad" viewBox="0 0 24 24"><use href="#c-circ"/><path d="M11 12l6-5" stroke="#c81818" stroke-width="1.500"/><circle cx="11" cy="12" r="1.700" fill="#c81818"/></symbol>
        <symbol id="c-ctan" viewBox="0 0 24 24"><use href="#c-circ"/><path d="M12 1l10 9" stroke="#a01c1c"/><circle cx="11" cy="12" r="1.700" fill="#c81818"/></symbol>
        <!-- navegador -->
        <symbol id="t-plus" viewBox="0 0 16 20"><path d="M6.500 14v6M11 10.500h5" stroke="#ddd" stroke-dasharray="1 1"/><path d="M3 7h7v7H3z" fill="#003c00"/><path d="M4 10.500h5M6.500 8v5" stroke="#fff"/></symbol>
        <symbol id="t-minus" viewBox="0 0 16 20"><path d="M6.500 0v6M11 10.500h5" stroke="#ddd" stroke-dasharray="1 1"/><path d="M3 7h7v7H3z" fill="#003c00"/><path d="M4 10.500h5" stroke="#fff"/></symbol>
        <symbol id="t-leaf" viewBox="0 0 16 20"><path d="M5.500 0v10.500h9" fill="none" stroke="#ddd" stroke-dasharray="1 1"/></symbol>
        <symbol id="views" viewBox="0 0 16 16"><path d="M8 1l6 3v7l-6 4-6-4V4zM2 4l6 4 6-4M8 1v14" fill="none" stroke="#14784c" stroke-width="1.300"/><path d="M10 14l5-2" stroke="#e04818" stroke-width="2"/></symbol>
        <symbol id="camera" viewBox="0 0 16 16"><path d="M2 6l4-5 6 1v9l-4 4-6-1z" fill="#fff" stroke="#d41818" stroke-width="1.300"/><circle cx="8" cy="7" r="3" fill="#98a8ff" stroke="#1c1c9c" stroke-width="1.500"/><path d="M12 4h3v8h-3z" fill="#111"/></symbol>
        <symbol id="folder" viewBox="0 0 16 16"><path d="M1 3h5l1 2h6v9H1z" fill="#e89a18"/><path d="M4 7h12l-3 7H1z" fill="#ffe070"/></symbol>
        <symbol id="datum" viewBox="0 0 16 16"><path d="M4 5l4-2v6l5 2-4 3-5-3z" fill="#f2f2f2" stroke="#222" stroke-width=".7"/><path d="M4 5l2 2v4M8 9l-2 2" stroke="#222" fill="none" stroke-width=".7"/><path d="M2 0v5" stroke="#1c1cc0"/><path d="M10 7l5-3" stroke="#14742a"/><path d="M11 14l4 1" stroke="#a01818"/></symbol>
        <symbol id="r-asm" viewBox="0 0 16 16"><path d="M1 2l4-1 3 3v3L4 8 1 6zM10 10l3-1 2 3-3 3-2-2z" fill="url(#gGold)" stroke="#996a0a" stroke-width=".7"/><path d="M4 8v7M4 12h4M10 9h6" stroke="#1818c4"/></symbol>
        <symbol id="r-part" viewBox="0 0 16 16"><path d="M2 2h6v6H2z" fill="#f8a0f0" stroke="#98208c" stroke-width=".7"/><path d="M2 2h6v2H2z" fill="#fff"/><path d="M4 8v7M4 12h4M10 8h5" stroke="#1818c4"/><circle cx="12" cy="12" r="2" fill="#fff" stroke="#b01c9c" stroke-width="1.400"/></symbol>
        <symbol id="r-books" viewBox="0 0 16 16"><path d="M1 4l3-3h3v10l-2 4H1z" fill="#f09a20"/><path d="M6 4l3-3h2v10l-1 4H6z" fill="#2cb43c"/><path d="M11 4l3-3h2v11l-2 3h-3z" fill="#3484e8"/><path d="M2 5h2M7 5h2M12 5h2M2 12h2M7 12h2M12 12h2" stroke="#fff"/></symbol>
        <symbol id="r-doc" viewBox="0 0 16 16"><path d="M2 1h9l3 3v11H2z" fill="#f4f8ff" stroke="#1c58d8" stroke-width="1.500"/><circle cx="8" cy="9" r="2.500" fill="#168c5c"/></symbol>
        <symbol id="r-clock" viewBox="0 0 16 16"><circle cx="8" cy="8" r="7" fill="#dce8f8" stroke="#98a0ac" stroke-width="1.400"/><path d="M8 3v5h5" fill="none" stroke="#18243c" stroke-width="1.600"/></symbol>
        <symbol id="r-color" viewBox="0 0 16 16"><path d="M1 1h6v4H1z" fill="#ff5a20"/><path d="M1 4h6v3H1z" fill="#ffe820"/><path d="M1 7h6v3H1z" fill="#28d848"/><path d="M1 10h6v5H1z" fill="#2880f0"/><path d="M8 4l6 10" stroke="#000" stroke-width="2"/><path d="M8 1v6M5 4h6" stroke="#fff" stroke-width="1.500"/></symbol>
        <symbol id="r-wand" viewBox="0 0 16 16"><path d="M2 2h8v10H2z" fill="#3f80d0"/><path d="M9 4l5 10" stroke="#000" stroke-width="2"/><path d="M8 1v6M5 4h10" stroke="#dbe8f8" stroke-width="1.500"/><path d="M1 13h5" stroke="#ffd848" stroke-width="2"/></symbol>
        <symbol id="r-robot" viewBox="0 0 16 16"><path d="M9 2h5l1 2M9 3L7 9l2 3M7 9l-4 4" fill="none" stroke="#c8ccd0" stroke-width="1.800"/><circle cx="12" cy="2" r="1.500" fill="#000"/><path d="M1 12h5v3H1z" fill="#f08428"/><path d="M9 13h4" stroke="#3478d8" stroke-width="2"/></symbol>
        <symbol id="flag" viewBox="0 0 16 16"><path d="M0 0h16v16H0z" fill="#333" stroke="#111"/><path d="M3 5l3-1v10M6 4l8-1-1 7-6 1z" fill="#1a1a1a" stroke="#000"/><path d="M8 5h2v2H8zM11 7h2v2h-2z" fill="#555"/></symbol>
    </svg>

    <header class="titlebar">
        <span class="nx">NX</span>
        <button class="cell" aria-label="保存"><svg class="icon"><use href="#save"/></svg></button>
        <span class="sep"></span>
        <button class="cell" aria-label="撤销"><svg class="icon"><use href="#undo"/></svg></button>
        <i class="caret"></i>
        <button class="cell" aria-label="重做"><svg class="icon"><use href="#redo"/></svg></button>
        <span class="sep"></span>
        <button class="cell" aria-label="剪切"><svg class="icon"><use href="#cut"/></svg></button>
        <button class="cell" aria-label="复制"><svg class="icon"><use href="#copy"/></svg></button>
        <button class="cell" aria-label="粘贴"><svg class="icon"><use href="#paste"/></svg></button>
        <button class="cell" aria-label="定向"><svg class="icon"><use href="#target"/></svg></button>
        <button class="cell" aria-label="属性"><svg class="icon"><use href="#key"/></svg></button>
        <i class="caret"></i>
        <span class="sep"></span>
        <button class="cell" aria-label="触控"><svg class="icon"><use href="#hand"/></svg></button>
        <span class="sep"></span>
        <button class="item"><svg class="icon"><use href="#switch-win"/></svg>切换窗口</button>
        <button class="item"><svg class="icon"><use href="#window"/></svg>窗口</button>
        <i class="caret"></i>
        <button class="cell" aria-label="拉出面"><svg class="icon"><use href="#pull-face"/></svg></button>
        <i class="caret bar"></i>
        <h1 class="title">NX 12 - 建模</h1>
        <div class="brand"><span>SIEMENS</span><i class="min"></i><i class="max"></i></div>
        <div class="tip tip-start">开始</div>
    </header>

    <nav class="tabs">
        <a class="file" href="#">文件(F)</a>
        <a class="tab home" href="#"><span>主页</span></a>
        <a class="tab" href="#"><span>分析</span></a>
        <a class="tab" href="#"><span>曲面</span></a>
        <a class="tab" href="#"><span>曲线</span></a>
        <a class="tab" href="#"><span>视图</span></a>
        <a class="tab" href="#"><span>应用模块</span></a>
        <a class="tab wide" href="#"><span>燕秀UG模具·</span></a>
        <a class="tab" href="#"><span>燕秀UG工具</span></a>
        <a class="tab" href="#"><span>拆电极</span></a>
        <a class="tab" href="#"><span>2D图纸</span></a>
        <a class="tab wide" href="#"><span>进玉电极V17</span></a>
        <a class="tab" href="#"><span>其他项</span></a>
        <a class="tab" href="#"><span>刀路</span></a>
        <a class="tab wide" href="#"><span>燕秀CNC超级</span></a>
        <a class="tab wide" href="#"><span>慧正设计V5.3</span></a>
        <a class="tab wide" href="#"><span>鹿工编程工具</span></a>
        <a class="tab wide" href="#"><span>鹿工分析与颜</span></a>
        <a class="tab" href="#"><span>鹿工工具</span></a>
        <a class="tab" href="#"><span>其它小程序</span></a>
        <a class="tab wide" href="#"><span>鹿工坐标与图</span></a>
        <a class="tab wide" href="#"><span>鹿工移动与删</span></a>
        <a class="tab wide" href="#"><span>鹿工制图工具</span></a>
        <a class="tab last" href="#"><span>燕秀PM编程·</span></a>
        <div class="search">
            <input type="text" value="修剪" aria-label="命令查找器">
            <svg class="icon"><use href="#search"/></svg>
        </div>
        <div class="tab-end">
            <button aria-label="全屏"><svg class="icon full"><use href="#full"/></svg></button>
            <button aria-label="最小化功能区"><svg class="icon up"><use href="#up"/></svg></button>
            <button class="help" aria-label="帮助">?</button>
        </div>
    </nav>

    <section class="ribbon">
        <div class="stack quick">
            <button aria-label="保存"><svg class="icon"><use href="#save"/></svg></button>
            <button aria-label="另存为"><svg class="icon"><use href="#save-as"/></svg></button>
            <button aria-label="复制"><svg class="icon"><use href="#copy"/></svg></button>
        </div>
        <div class="group sketch-group">
            <div class="group-body">
                <button class="big"><svg class="icon x28"><use href="#sketch"/></svg>草图</button>
                <div class="pair">
                    <button aria-label="轮廓"><svg class="icon x24"><use href="#curve"/></svg></button>
                    <button aria-label="矩形"><svg class="icon x24"><use href="#rect"/></svg></button>
                </div>
                <div class="stack arrows"><i class="caret upward"></i><i class="caret"></i><i class="caret bar"></i></div>
            </div>
            <div class="group-foot"><span>直接草图</span><i class="caret"></i></div>
        </div>
        <div class="pair paste-pair">
            <button class="item"><svg class="icon x20"><use href="#paste"/></svg>粘贴</button>
            <button class="item"><svg class="icon x20"><use href="#cross"/></svg>删除</button>
        </div>
        <button class="chev" aria-label="展开"><svg class="icon x24"><use href="#chevrons"/></svg></button>
        <div class="pair undo-pair">
            <button class="item"><svg class="icon x20"><use href="#undo"/></svg>撤消<i class="caret"></i></button>
            <button class="item"><svg class="icon x20"><use href="#redo"/></svg>重做</button>
        </div>
        <div class="start">
            <button class="item"><svg class="icon"><use href="#globe"/></svg>启动<i class="caret"></i></button>
            <button aria-label="坐标系"><svg class="icon"><use href="#wcs-up"/></svg></button>
        </div>
        <div class="commands">
            <button class="item"><svg class="icon"><use href="#split-body"/></svg>拆分体</button>
            <button class="item"><svg class="icon"><use href="#trim-sheet"/></svg>修剪片体</button>
            <button class="item"><svg class="icon"><use href="#trim-ext"/></svg>修剪和延伸</button>
            <button class="item"><svg class="icon"><use href="#trim-body"/></svg>修剪体</button>
            <button class="item"><svg class="icon"><use href="#revolve"/></svg>旋转</button>
            <button class="item"><svg class="icon"><use href="#split-sub"/></svg><span>拆分细分体(<u>S</u>)</span></button>
            <button class="item"><svg class="icon"><use href="#unite"/></svg>求和</button>
            <button class="item"><svg class="icon"><use href="#subtract"/></svg>求差</button>
            <button class="item"><svg class="icon"><use href="#intersect"/></svg>相交</button>
            <button class="item"><svg class="icon"><use href="#extrude"/></svg>拉伸</button>
            <button class="item"><svg class="icon"><use href="#patch"/></svg>修补开口</button>
            <button class="item"><svg class="icon"><use href="#extend-sheet"/></svg>延伸片体</button>
            <button class="item"><svg class="icon"><use href="#split-face"/></svg>分割面</button>
            <button class="item"><svg class="icon"><use href="#thicken"/></svg>加厚</button>
            <button class="item"><svg class="icon"><use href="#move-face"/></svg>移动面</button>
            <button class="item"><svg class="icon"><use href="#pull-face"/></svg>拉出面</button>
            <button class="item"><svg class="icon"><use href="#offset-face"/></svg>偏置面</button>
            <button class="item"><svg class="icon"><use href="#replace-face"/></svg>替换面</button>
            <button class="item"><svg class="icon"><use href="#delete-face"/></svg>删除面</button>
            <button class="item"><svg class="icon"><use href="#opt-face"/></svg>优化面</button>
            <button class="item"><svg class="icon"><use href="#replace-face"/></svg>替换圆角</button>
            <button class="item"><svg class="icon"><use href="#size-face"/></svg>调整面大小</button>
            <button class="item"><svg class="icon"><use href="#size-chamfer"/></svg>调整倒斜角大小</button>
            <button class="item"><svg class="icon"><use href="#sew"/></svg>缝合</button>
            <button class="item"><svg class="icon"><use href="#offset-blue"/></svg>偏置面</button>
            <button class="item"><svg class="icon"><use href="#edge-blend"/></svg>边倒圆</button>
            <button class="item"><svg class="icon"><use href="#chamfer"/></svg>倒斜角</button>
            <button class="item"><svg class="icon"><use href="#shell"/></svg>抽壳</button>
            <button class="item"><svg class="icon"><use href="#offset-surf"/></svg>偏置曲面</button>
            <button class="item"><svg class="icon"><use href="#blend-corner"/></svg>倒圆拐角</button>
            <button class="item"><svg class="icon"><use href="#draft"/></svg>拔模</button>
            <button class="item"><svg class="icon"><use href="#draft-body"/></svg>拔模体</button>
            <button class="item"><svg class="icon"><use href="#styled"/></svg>样式拐角</button>
            <button class="item"><svg class="icon"><use href="#thru"/></svg>通过曲线组</button>
            <button class="item"><svg class="icon"><use href="#mesh"/></svg>通过曲线网格</button>
            <button class="item"><svg class="icon"><use href="#art"/></svg>艺术曲面</button>
        </div>
        <div class="small-grid">
            <button aria-label="面上曲线"><svg class="icon"><use href="#surf-at"/></svg></button>
            <button aria-label="网格"><svg class="icon"><use href="#grid-sheet"/></svg></button>
            <button aria-label="扫掠"><svg class="icon"><use href="#sweep"/></svg></button>
            <button aria-label="实体"><svg class="icon"><use href="#solids"/></svg></button>
            <button aria-label="轮廓"><svg class="icon"><use href="#shape"/></svg></button>
            <button aria-label="投影"><svg class="icon"><use href="#sheet-line"/></svg></button>
            <button aria-label="桥接曲线"><svg class="icon"><use href="#scurve"/></svg></button>
            <button aria-label="连结曲线"><svg class="icon"><use href="#scurve"/></svg></button>
            <button aria-label="组合曲线"><svg class="icon"><use href="#scurve"/></svg></button>
            <button aria-label="基准平面"><svg class="icon"><use href="#planes"/></svg></button>
            <button aria-label="样条"><svg class="icon"><use href="#s-red"/></svg></button>
            <button aria-label="拐角"><svg class="icon"><use href="#corner"/></svg></button>
            <button aria-label="弯曲"><svg class="icon"><use href="#bends"/></svg></button>
            <button aria-label="管"><svg class="icon"><use href="#tube"/></svg></button>
            <button aria-label="偏置曲线"><svg class="icon"><use href="#arches"/></svg></button>
            <button aria-label="有界平面"><svg class="icon"><use href="#patch-red"/></svg></button>
            <button aria-label="移动对象"><svg class="icon"><use href="#ibeam"/></svg></button>
            <button aria-label="复制对象"><svg class="icon"><use href="#ibeam-g"/></svg></button>
            <button aria-label="测量"><svg class="icon"><use href="#ruler"/></svg></button>
            <button aria-label="测量距离"><svg class="icon"><use href="#measure"/></svg></button>
            <button aria-label="导出"><svg class="icon"><use href="#export"/></svg></button>
        </div>
        <i class="caret mid"></i>
        <div class="small-grid">
            <button aria-label="抑制"><svg class="icon"><use href="#export-g"/></svg></button>
            <button aria-label="新建层"><svg class="icon"><use href="#export-y"/></svg></button>
            <button aria-label="点集"><svg class="icon"><use href="#pts"/></svg></button>
            <button aria-label="坐标系"><svg class="icon"><use href="#csys"/></svg></button>
            <button aria-label="尺寸"><svg class="icon"><use href="#dim-x"/></svg></button>
            <button aria-label="孔"><svg class="icon"><use href="#box-hole"/></svg></button>
        </div>
        <button class="big w50"><svg class="icon x28"><use href="#surface"/></svg>曲面<i class="caret"></i></button>
        <button class="big"><svg class="icon x28"><use href="#snip"/></svg>剪断</button>
        <div class="stack narrow">
            <button aria-label="环"><svg class="icon"><use href="#ring"/></svg></button>
            <button aria-label="长度"><svg class="icon"><use href="#ruler-h"/></svg></button>
            <button aria-label="空"><svg class="icon"><use href="#blank"/></svg></button>
        </div>
        <div class="group asm-group">
            <div class="group-body">
                <div class="pair">
                    <button aria-label="装配"><svg class="icon x24"><use href="#asm-dark"/></svg></button>
                    <button class="item" aria-label="添加组件"><svg class="icon x24"><use href="#asm-add"/></svg><i class="caret"></i></button>
                </div>
                <div class="stack">
                    <button aria-label="装配约束"><svg class="icon"><use href="#mate"/></svg></button>
                    <button aria-label="移动组件"><svg class="icon"><use href="#asm-move"/></svg></button>
                    <button aria-label="阵列组件"><svg class="icon"><use href="#asm-pat"/></svg></button>
                </div>
            </div>
            <div class="group-foot"><span>装配</span><i class="caret"></i></div>
        </div>
        <div class="group measure-group">
            <button class="big"><svg class="icon x32"><use href="#angle"/></svg><span>测量角度（<br>即将失效)</span></button>
            <div class="group-foot"><i class="caret"></i></div>
        </div>
    </section>

    <section class="toolbar">
        <button class="item menu"><svg class="icon"><use href="#menu"/></svg><span>菜单(<u>M</u>)</span><i class="caret"></i></button>
        <div class="combo"><select aria-label="类型过滤器"><option>无选择过滤器</option></select></div>
        <div class="combo wide"><select aria-label="选择范围"><option>整个装配</option></select></div>
        <button class="cell" aria-label="重置过滤器"><svg class="icon"><use href="#filter-off"/></svg></button>
        <button class="cell" aria-label="过滤器"><svg class="icon"><use href="#filter-on"/></svg></button>
        <i class="caret"></i>
        <button class="cell" aria-label="实体"><svg class="icon"><use href="#bcube"/></svg></button>
        <button class="cell" aria-label="隐藏"><svg class="icon"><use href="#dot-cube"/></svg></button>
        <button class="cell" aria-label="矩形选择"><svg class="icon"><use href="#dot-rect"/></svg></button>
        <i class="caret"></i>
        <span class="sep"></span>
        <button class="cell" aria-label="组件"><svg class="icon"><use href="#boxes"/></svg></button>
        <div class="snaps">
            <button class="on" aria-label="启用捕捉点"><svg class="icon"><use href="#snap"/></svg></button>
            <button class="on" aria-label="端点"><svg class="icon"><use href="#end-pt"/></svg></button>
            <button class="on" aria-label="中点"><svg class="icon"><use href="#mid-pt"/></svg></button>
            <button aria-label="控制点"><svg class="icon"><use href="#s-pt"/></svg></button>
            <button class="on" aria-label="极点"><svg class="icon"><use href="#poles"/></svg></button>
            <button class="on" aria-label="交点"><svg class="icon"><use href="#plus-pt"/></svg></button>
            <button class="on" aria-label="曲线点"><svg class="icon"><use href="#wave"/></svg></button>
            <button aria-label="相切"><svg class="icon"><use href="#tangent"/></svg></button>
            <button aria-label="象限点"><svg class="icon"><use href="#quad"/></svg></button>
            <button class="on" aria-label="圆心"><svg class="icon"><use href="#centre"/></svg></button>
            <button class="on" aria-label="现有点"><svg class="icon"><use href="#low-pt"/></svg></button>
            <button aria-label="面上点"><svg class="icon"><use href="#face-pt"/></svg></button>
            <button aria-label="小平面"><svg class="icon"><use href="#mesh-pt"/></svg></button>
            <button aria-label="有界点"><svg class="icon"><use href="#bound"/></svg></button>
            <button aria-label="点"><svg class="icon"><use href="#plus"/></svg></button>
            <button aria-label="高亮"><svg class="icon"><use href="#h-box"/></svg></button>
            <button aria-label="边"><svg class="icon"><use href="#red-cube"/></svg></button>
            <button aria-label="着色"><svg class="icon"><use href="#blue-box"/></svg></button>
            <button aria-label="线框"><svg class="icon"><use href="#gold-box"/></svg></button>
        </div>
        <button class="update">更新显示</button>
        <div class="snaps">
            <button aria-label="栅格"><svg class="icon"><use href="#dark-grid"/></svg></button>
            <button aria-label="图像"><svg class="icon"><use href="#image"/></svg></button>
            <button aria-label="标注"><svg class="icon"><use href="#dim-line"/></svg></button>
            <button aria-label="图像 2"><svg class="icon"><use href="#image"/></svg></button>
            <button aria-label="图像 3"><svg class="icon"><use href="#image"/></svg></button>
        </div>
        <div class="two-rows">
            <button class="swatch white" aria-label="白"></button>
            <button class="swatch green" aria-label="绿"></button>
            <button class="swatch red" aria-label="红"></button>
            <button aria-label="确定"><svg class="icon"><use href="#tick"/></svg></button>
            <button aria-label="螺钉"><svg class="icon"><use href="#bolt"/></svg></button>
            <button aria-label="链接"><svg class="icon"><use href="#link"/></svg></button>
            <button aria-label="对齐"><svg class="icon"><use href="#squares"/></svg></button>
            <button aria-label="保存"><svg class="icon"><use href="#save"/></svg></button>
            <button aria-label="角色"><svg class="icon"><use href="#person"/></svg></button>
            <button aria-label="修剪片体"><svg class="icon"><use href="#trim-sheet"/></svg></button>
            <button aria-label="图层"><svg class="icon"><use href="#overlap"/></svg></button>
            <button aria-label="延伸"><svg class="icon"><use href="#extend-sheet"/></svg></button>
            <button aria-label="复制对象"><svg class="icon"><use href="#ibeam-g"/></svg></button>
            <button aria-label="移动对象"><svg class="icon"><use href="#ibeam"/></svg></button>
            <button class="word">舞台光</button>
            <button class="word">移动1</button>
            <button class="word">复制2</button>
            <button class="word">全选删除</button>
            <button class="word">Y旋转180</button>
            <button class="left" aria-label="禁止"><svg class="icon"><use href="#stop"/></svg></button>
            <button aria-label="橙色体"><svg class="icon"><use href="#ocube"/></svg></button>
            <button aria-label="橙色片体"><svg class="icon"><use href="#osheet"/></svg></button>
            <button aria-label="顶面"><svg class="icon"><use href="#ocube-top"/></svg></button>
            <button aria-label="凸台"><svg class="icon"><use href="#opad"/></svg></button>
            <button aria-label="白色体"><svg class="icon"><use href="#wcube"/></svg></button>
            <button aria-label="曲线"><svg class="icon"><use href="#spline"/></svg></button>
            <button aria-label="注释"><svg class="icon"><use href="#board"/></svg></button>
            <button aria-label="坐标轴"><svg class="icon"><use href="#axes"/></svg></button>
            <button aria-label="组合体"><svg class="icon"><use href="#opair"/></svg></button>
        </div>
        <button class="cell fit" aria-label="适合窗口"><svg class="icon"><use href="#fit"/></svg></button>
        <div class="view-rows">
            <button aria-label="平移"><svg class="icon"><use href="#grab"/></svg></button>
            <button aria-label="旋转"><svg class="icon"><use href="#rotate"/></svg></button>
            <button aria-label="探测"><svg class="icon"><use href="#probe"/></svg></button>
            <button aria-label="计算"><svg class="icon"><use href="#calc"/></svg></button>
            <button aria-label="表"><svg class="icon"><use href="#table"/></svg></button>
            <button aria-label="剪切截面"><svg class="icon"><use href="#clip-gray"/></svg></button>
            <i class="caret"></i>
            <i class="caret"></i>
            <button aria-label="带边着色"><svg class="icon"><use href="#blue-box"/></svg></button>
            <button aria-label="显示和隐藏"><svg class="icon"><use href="#play-box"/></svg></button>
            <i class="caret"></i>
            <i class="caret"></i>
        </div>
        <i class="caret tail"></i>
    </section>

    <main class="work">
        <aside class="curves">
            <button aria-label="直线"><svg class="icon x24"><use href="#c-line"/></svg></button>
            <button aria-label="沿轴直线"><svg class="icon x24"><use href="#c-axis"/></svg></button>
            <button aria-label="平行线"><svg class="icon x24"><use href="#c-par"/></svg></button>
            <button aria-label="垂线"><svg class="icon x24"><use href="#c-perp"/></svg></button>
            <button aria-label="点切线"><svg class="icon x24"><use href="#c-tan"/></svg></button>
            <button aria-label="双切线"><svg class="icon x24"><use href="#c-tan2"/></svg></button>
            <button aria-label="曲线法线"><svg class="icon x24"><use href="#c-wave"/></svg></button>
            <button aria-label="曲线切线"><svg class="icon x24"><use href="#c-wave2"/></svg></button>
            <button aria-label="网格面"><svg class="icon x24"><use href="#c-net"/></svg></button>
            <button aria-label="三点圆弧"><svg class="icon x24"><use href="#c-arc"/></svg></button>
            <button aria-label="相切圆弧"><svg class="icon x24"><use href="#c-arc2"/></svg></button>
            <button aria-label="三切圆弧"><svg class="icon x24"><use href="#c-u"/></svg></button>
            <button aria-label="圆角"><svg class="icon x24"><use href="#c-fil"/></svg></button>
            <button aria-label="三点圆"><svg class="icon x24"><use href="#c-3pt"/></svg></button>
            <button aria-label="两点切圆"><svg class="icon x24"><use href="#c-2pt"/></svg></button>
            <button aria-label="三切圆"><svg class="icon x24"><use href="#c-3tan"/></svg></button>
            <button aria-label="双切圆"><svg class="icon x24"><use href="#c-2tan"/></svg></button>
            <button aria-label="圆心和点"><svg class="icon x24"><use href="#c-cpt"/></svg></button>
            <button aria-label="圆心和半径"><svg class="icon x24"><use href="#c-rad"/></svg></button>
            <button aria-label="圆心相切"><svg class="icon x24"><use href="#c-ctan"/></svg></button>
            <i class="caret leftward"></i>
        </aside>

        <section class="graphics">
            <nav class="docs">
                <a class="doc" href="#"><svg class="icon"><use href="#bolt"/></svg><span>CA013-上模.prt</span><svg class="icon x12"><use href="#edited"/></svg></a>
                <a class="doc active" href="#"><svg class="icon"><use href="#part"/></svg><span>_model1.prt</span><svg class="icon x12"><use href="#edited"/></svg><b>✕</b></a>
                <a class="doc" href="#"><svg class="icon"><use href="#bolt"/></svg><span>CA013-下模.prt</span><svg class="icon x12"><use href="#edited"/></svg></a>
                <a class="doc" href="#"><svg class="icon"><use href="#part"/></svg><span>CA013-ASSEMBLE.prt</span><svg class="icon x12"><use href="#edited"/></svg></a>
                <a class="doc" href="#"><svg class="icon"><use href="#bolt"/></svg><span>TD407-上模座反面旧程序可用.prt</span><svg class="icon x12"><use href="#edited"/></svg></a>
            </nav>
            <div class="canvas">
                <svg class="scene" viewBox="35 218 1259 836" preserveAspectRatio="xMinYMin slice">
                    <!-- pontos da grade -->
                    <path class="dots" d="M1285 358h1M1218 373h1M1151 387h1M1253 390h1M1087 402h1M1186 404h1M1250 405h1M1025 418h1M1119 419h1M973 438h1M1055 434h1M926 453h1M993 451h1M1119 435h1M1218 437h1M1151 451h1M885 469h1M941 471h1M1056 450h1M1087 465h1M854 481h1M894 485h1M1025 483h1M959 486h1M832 490h1M854 501h1M973 503h1M916 501h1M926 518h1M879 512h1M885 533h1M854 545h1M832 553h1M822 513h1M800 528h1M771 533h1M782 528h1M814 496h1M803 501h1M794 505h1M788 507h1M846 528h1M835 533h1M826 537h1M820 539h1M762 537h1M756 539h1M803 565h1M814 560h1M794 569h1M788 571h1M776 509h3M780 509h1M784 509h1M744 541h3M748 541h1M752 541h1M808 541h3M812 541h1M816 541h1M776 573h3M780 573h1M784 573h1"/>
                    <path class="dots" d="M777 219v2M780 219v2M783 219v2M787 219v2M794 219v2M808 219v2M822 219v2M854 219v2M885 219v2M926 219v2M973 219v2M1025 219v2M1087 219v2M1151 219v2M1218 219v2M1285 219v2M35 391h2M35 406h2M35 420h2M35 435h2M35 452h2M35 472h2M35 487h2M35 502h2M35 514h2M35 523h2M35 529h2M35 534h2M35 538h2M35 541h2"/>
                    <!-- sistema de coordenadas -->
                    <g class="datum">
                        <path d="M701 606V490M701 600l95-29M701 600l74 33M701 537l52-16v62l42 20-52 16v-62zM694 600h14"/>
                        <path class="head" d="M701 477l3 15h-6zM804 568l-14 2 1 5zM784 639l-9-7-3 4z"/>
                        <text x="697" y="474">Z</text>
                        <text x="805" y="571">Y</text>
                        <text x="785" y="645">X</text>
                    </g>
                    <!-- triade -->
                    <path d="M102 951l19-7 18 7v25l-18 5-19-6z" transform="translate(0 1)" fill="#9c9c9c" stroke="#c8c8c8"/>
                    <path d="M102 952l17 6 20-6M119 958v22M121 945v24l18 8M121 969l-19 8" fill="none" stroke="#cdcdcd"/>
                    <path d="M101 986l36-11" stroke="#90c49c" stroke-width="2"/>
                    <path d="M125 976l12-1-10 5z" fill="#6cb080"/>
                    <path d="M101 986V950" stroke="#0838d0" stroke-width="3"/>
                    <path d="M101 944l4 12h-8z" fill="#0838d0"/>
                    <path d="M101 986l22 9" stroke="#c82830" stroke-width="3"/>
                    <path d="M130 1000l-8-8-3 5z" fill="#d82c34"/>
                    <circle cx="100" cy="987" r="4" fill="#e4e4e4"/>
                    <text class="z" x="97" y="944">Z</text>
                    <text class="y" x="137" y="980">Y</text>
                    <text class="x" x="128" y="1006">X</text>
                </svg>
            </div>
        </section>

        <aside class="navigator">
            <div class="nav-main">
                <h2><i class="pin"></i>部件导航器</h2>
                <table class="tree">
                    <colgroup><col class="c-name"><col class="c-mid"><col class="c-mid"><col class="c-mid"><col class="c-end"></colgroup>
                    <thead>
                        <tr><th>名称<i class="caret sort"></i></th><th>图层</th><th>最新</th><th>附注</th><th></th></tr>
                    </thead>
                    <tbody>
                        <tr><td><div class="node"><svg class="icon branch"><use href="#t-plus"/></svg><svg class="icon"><use href="#views"/></svg>模型视图</div></td><td></td><td></td><td></td><td></td></tr>
                        <tr><td><div class="node"><svg class="icon branch"><use href="#t-plus"/></svg><svg class="icon x14"><use href="#tick"/></svg><svg class="icon"><use href="#camera"/></svg>摄像机</div></td><td></td><td></td><td></td><td></td></tr>
                        <tr><td><div class="node"><svg class="icon branch"><use href="#t-minus"/></svg><svg class="icon"><use href="#folder"/></svg>模型历史记录</div></td><td></td><td></td><td></td><td></td></tr>
                        <tr class="bold"><td><div class="node leaf"><svg class="icon branch"><use href="#t-leaf"/></svg><input type="checkbox" id="csys0" checked><svg class="icon"><use href="#datum"/></svg><label for="csys0">基准坐标系 (0)</label></div></td><td>61</td><td><svg class="icon x12"><use href="#tick"/></svg></td><td></td><td></td></tr>
                        <tr><td></td><td></td><td></td><td></td><td></td></tr>
                        <tr><td></td><td></td><td></td><td></td><td></td></tr>
                        <tr><td></td><td></td><td></td><td></td><td></td></tr>
                        <tr><td></td><td></td><td></td><td></td><td></td></tr>
                        <tr><td></td><td></td><td></td><td></td><td></td></tr>
                        <tr><td></td><td></td><td></td><td></td><td></td></tr>
                        <tr><td></td><td></td><td></td><td></td><td></td></tr>
                        <tr><td></td><td></td><td></td><td></td><td></td></tr>
                        <tr><td></td><td></td><td></td><td></td><td></td></tr>
                        <tr><td></td><td></td><td></td><td></td><td></td></tr>
                        <tr><td></td><td></td><td></td><td></td><td></td></tr>
                        <tr><td></td><td></td><td></td><td></td><td></td></tr>
                        <tr><td></td><td></td><td></td><td></td><td></td></tr>
                        <tr><td></td><td></td><td></td><td></td><td></td></tr>
                        <tr><td></td><td></td><td></td><td></td><td></td></tr>
                        <tr><td></td><td></td><td></td><td></td><td></td></tr>
                        <tr><td></td><td></td><td></td><td></td><td></td></tr>
                        <tr><td></td><td></td><td></td><td></td><td></td></tr>
                        <tr><td></td><td></td><td></td><td></td><td></td></tr>
                        <tr><td></td><td></td><td></td><td></td><td></td></tr>
                        <tr><td></td><td></td><td></td><td></td><td></td></tr>
                        <tr><td></td><td></td><td></td><td></td><td></td></tr>
                        <tr><td></td><td></td><td></td><td></td><td></td></tr>
                        <tr><td></td><td></td><td></td><td></td><td></td></tr>
                        <tr><td></td><td></td><td></td><td></td><td></td></tr>
                        <tr><td></td><td></td><td></td><td></td><td></td></tr>
                        <tr><td></td><td></td><td></td><td></td><td></td></tr>
                        <tr><td></td><td></td><td></td><td></td><td></td></tr>
                        <tr><td></td><td></td><td></td><td></td><td></td></tr>
                        <tr><td></td><td></td><td></td><td></td><td></td></tr>
                        <tr><td></td><td></td><td></td><td></td><td></td></tr>
                        <tr><td></td><td></td><td></td><td></td><td></td></tr>
                    </tbody>
                    <tfoot><tr><td></td><td></td><td></td><td></td><td></td></tr></tfoot>
                </table>
                <div class="sections">
                    <div class="splitter"></div>
                    <button class="section">相关性<i></i></button>
                    <button class="section">细节<i></i></button>
                    <button class="section">预览<i></i></button>
                </div>
            </div>
            <nav class="rail">
                <button class="gear" aria-label="设置"><svg class="icon"><use href="#gear"/></svg></button>
                <button aria-label="装配导航器"><svg class="icon"><use href="#r-asm"/></svg></button>
                <button aria-label="约束导航器"><svg class="icon"><use href="#mate"/></svg></button>
                <button class="current" aria-label="部件导航器"><svg class="icon"><use href="#r-part"/></svg></button>
                <button aria-label="重用库"><svg class="icon"><use href="#r-books"/></svg></button>
                <button class="web" aria-label="浏览器"><svg class="icon"><use href="#r-doc"/></svg></button>
                <button class="clock" aria-label="历史记录"><svg class="icon"><use href="#r-clock"/></svg></button>
                <button aria-label="系统材料"><svg class="icon"><use href="#r-color"/></svg></button>
                <button aria-label="加工向导"><svg class="icon"><use href="#r-wand"/></svg></button>
                <button aria-label="角色"><svg class="icon"><use href="#r-robot"/></svg></button>
            </nav>
            <div class="tip tip-browser">撰写文章 - NX网 - 360安全</div>
        </aside>
    </main>

    <footer class="status">
        <span>选择对象并使用 MB3，或者双击某一对象</span>
        <div class="status-icons">
            <svg class="icon"><use href="#flag"/></svg>
            <svg class="icon"><use href="#full"/></svg>
        </div>
        <div class="ime">
            <svg class="sogou" viewBox="0 0 32 30"><path d="M1 6q0-2 2-2L24 0q3 0 3 2l4 21q0 2-2 3L9 29q-3 1-4-2z" fill="#ee5a24"/><path d="M23 8c-5-2-13-1-13 3 0 5 14 1 14 7 0 5-10 6-15 3" fill="none" stroke="#fff" stroke-width="4"/></svg>
            <b>中</b>
            <svg viewBox="0 0 16 16"><circle cx="4" cy="5" r="2" fill="none" stroke="#0a6fd8" stroke-width="1.500"/><path d="M12 8a2 2 0 0 1 1 3l-3 4 1-4a2 2 0 0 1 1-3z" fill="#0a6fd8"/></svg>
            <svg viewBox="0 0 16 16"><rect x="5" y="0" width="6" height="10" rx="3" fill="#0a6fd8"/><path d="M2 6c0 7 12 7 12 0M8 12v4" fill="none" stroke="#0a6fd8" stroke-width="1.500"/></svg>
            <svg viewBox="0 0 16 16"><rect x="1" y="3" width="14" height="11" rx="1" fill="none" stroke="#0a6fd8" stroke-width="1.600"/><path d="M3 6h10M3 8.500h10M4 11.500h8" stroke="#0a6fd8" stroke-width="1.500" stroke-dasharray="2 1"/></svg>
            <svg viewBox="0 0 16 16"><path d="M5 1c1 2 5 2 6 0l5 3-2 4-2-1v8H4V7L2 8 0 4z" fill="#0a6fd8"/></svg>
            <svg viewBox="0 0 16 16"><rect x="1" y="2" width="6" height="6" rx="2" fill="#0a6fd8"/><circle cx="12" cy="5" r="2.300" fill="none" stroke="#0a6fd8" stroke-width="1.500"/><rect x="1" y="9" width="6" height="6" rx="2" fill="#0a6fd8"/><rect x="9" y="9" width="6" height="6" rx="2" fill="#0a6fd8"/></svg>
        </div>
        <div class="meter"><i></i></div>
    </footer>
</body>
</html>
```
FILE: styles.css
```css
*{
    margin: 0;
    padding: 0;
    box-sizing: border-box;
}
body{
    display: flex;
    flex-direction: column;
    height: 100vh;
    overflow: hidden;
    background-color: #464646;
    color: #ffffd9;
    font-family: "Noto Sans", "Noto Sans CJK SC", sans-serif;
    font-size: 11px;
    line-height: 16px;
    white-space: nowrap;
}
button{
    display: flex;
    align-items: center;
    justify-content: center;
    background: none;
    border: none;
    color: inherit;
    font: inherit;
    white-space: nowrap;
}
a{
    color: inherit;
    text-decoration: none;
}
.defs{
    position: absolute;
    width: 0;
    height: 0;
}

/* icones */
.icon{
    flex: none;
    width: 16px;
    height: 16px;
}
.x12{
    width: 12px;
    height: 12px;
}
.x14{
    width: 14px;
    height: 14px;
}
.x20{
    width: 20px;
    height: 20px;
}
.x24{
    width: 24px;
    height: 24px;
}
.x28{
    width: 28px;
    height: 28px;
}
.x32{
    width: 32px;
    height: 32px;
}
.caret{
    display: flex;
    flex: none;
    flex-direction: column;
    align-items: center;
    justify-content: center;
    width: 10px;
}
.caret::after{
    content: "";
    border: 3px solid transparent;
    border-top-color: #ffffd9;
    border-bottom: none;
}
.caret.upward::after, .caret.sort::after{
    border: 3px solid transparent;
    border-bottom-color: #ffffd9;
    border-top: none;
}
.caret.leftward::after{
    border: 4px solid transparent;
    border-right-color: #ffffff;
    border-left: none;
}
.caret.bar::before{
    content: "";
    width: 7px;
    height: 1px;
    margin-bottom: 2px;
    background-color: #ffffd9;
}
.cell{
    flex: none;
    width: 24px;
    height: 22px;
}
.sep{
    flex: none;
    width: 6px;
}
.item{
    justify-content: flex-start;
    gap: 4px;
}

/* titulo */
.titlebar{
    position: relative;
    display: flex;
    align-items: center;
    height: 24px;
}
.nx{
    width: 47px;
    padding-left: 3px;
    color: #8494a3;
    font: bold 22px/22px "Liberation Sans", sans-serif;
}
.titlebar .item{
    padding: 0 2px 0 4px;
}
.title{
    margin: 0 auto;
    font-size: 12px;
    font-weight: normal;
}
.brand{
    display: flex;
    align-items: center;
    gap: 16px;
    width: 155px;
    color: #109a9a;
    font: bold 13px/16px "Liberation Sans", sans-serif;
}
.min{
    width: 10px;
    height: 2px;
    margin-left: 10px;
    background-color: #606060;
}
.max{
    width: 10px;
    height: 9px;
    border: 1px solid #606060;
}
.tip{
    position: absolute;
    z-index: 2;
    overflow: hidden;
    background-color: #ffffff;
    border: 1px solid #777777;
    color: #575757;
    font-size: 12px;
    box-shadow: 2px 2px 3px rgba(0, 0, 0, 0.5);
}
.tip-start{
    top: 7px;
    right: 1px;
    height: 22px;
    padding: 1px 5px;
    line-height: 18px;
}

/* abas */
.tabs{
    display: flex;
    align-items: center;
    height: 30px;
    font-size: 13px;
}
.file{
    width: 81px;
    margin-right: 1px;
    background-color: #519fb8;
    color: #003c00;
    line-height: 30px;
    text-align: center;
}
.tab{
    flex: none;
    height: 25px;
    padding: 0 5px;
    border-right: 1px solid #a4a49c;
    line-height: 24px;
}
.tab.wide{
    width: 86px;
}
.tab span{
    display: block;
    overflow: hidden;
}
.tab.home{
    align-self: flex-start;
    height: 27px;
    margin-top: 1px;
    border-top: 1px solid #a4a49c;
    color: #176078;
    line-height: 27px;
}
.tab.last{
    border-right: none;
}
.search{
    display: flex;
    align-items: center;
    width: 125px;
    height: 20px;
    margin-left: auto;
    padding: 0 4px 0 2px;
    background-color: #003c00;
    border: 1px solid #b4c4b4;
}
.search input{
    flex: 1;
    min-width: 0;
    background: none;
    border: none;
    outline: none;
    color: #ffffd9;
    font: inherit;
    font-size: 11px;
}
.tab-end{
    display: flex;
    align-items: center;
    gap: 12px;
    width: 113px;
    padding-left: 11px;
}
.full{
    width: 24px;
    height: 24px;
}
.up{
    width: 20px;
    height: 14px;
}
.help{
    width: 20px;
    height: 20px;
    margin-left: 2px;
    background-color: #4a72cc;
    border: 1px solid #6f94e4;
    border-radius: 50%;
    color: #ffffff;
    font-size: 16px;
    font-weight: bold;
}

/* faixa de comandos */
.ribbon{
    display: flex;
    height: 96px;
    padding-top: 1px;
}
.stack, .small-grid, .commands{
    display: grid;
    grid-template-rows: repeat(3, 22px);
    align-content: start;
}
.quick{
    width: 34px;
}
.group{
    display: flex;
    flex-direction: column;
}
.group-body{
    display: flex;
    flex: 1;
}
.group-foot{
    display: flex;
    justify-content: flex-end;
    gap: 27px;
    height: 20px;
    padding-right: 7px;
    color: #176078;
}
.sketch-group{
    width: 111px;
}
.big{
    flex-direction: column;
    flex: none;
    justify-content: flex-start;
    gap: 6px;
    width: 44px;
    padding-top: 5px;
}
.w50{
    width: 50px;
}
.sketch-group .big{
    width: 55px;
}
.big .caret{
    height: 4px;
}
.pair{
    display: grid;
    grid-template-rows: 34px 34px;
    align-content: start;
    padding-top: 3px;
}
.sketch-group .pair{
    width: 32px;
}
.arrows{
    width: 19px;
    justify-items: center;
}
.paste-pair{
    width: 66px;
    padding-left: 12px;
}
.chev{
    align-items: flex-start;
    width: 30px;
    padding-top: 8px;
}
.paste-pair .item, .undo-pair .item{
    gap: 5px;
}
.undo-pair{
    width: 76px;
    padding-left: 8px;
}
.start{
    display: flex;
    align-items: center;
    width: 84px;
    height: 22px;
}
.start .item{
    gap: 3px;
    width: 58px;
}
.commands{
    grid-auto-flow: column;
    grid-template-columns: 83px 98px 51px 72px 63px 62px 73px 106px 62px 73px 73px 91px;
}
.small-grid{
    grid-auto-flow: column;
    grid-auto-columns: 25px;
}
.mid{
    height: 66px;
}
.narrow{
    width: 20px;
}
.asm-group{
    width: 84px;
    padding-left: 20px;
}
.asm-group .item{
    gap: 2px;
}
.asm-group .pair{
    width: 44px;
    justify-items: start;
}
.asm-group .group-foot{
    color: #0e7a80;
    padding-right: 0;
    gap: 24px;
}
.measure-group{
    flex: 1;
}
.measure-group .big{
    align-self: flex-start;
    width: 74px;
    gap: 3px;
    padding: 4px 0 0 12px;
    text-align: left;
}
.measure-group .group-foot{
    margin-top: auto;
    padding-right: 5px;
}

/* barra de selecao */
.toolbar{
    display: flex;
    align-items: center;
    height: 46px;
    padding-bottom: 2px;
    border-bottom: 1px solid #8c8c8c;
}
.menu{
    width: 99px;
    padding-left: 10px;
}
.combo{
    position: relative;
    width: 133px;
    height: 20px;
    margin-right: 9px;
}
.combo.wide{
    width: 140px;
    margin-right: 5px;
}
.combo select{
    width: 100%;
    height: 20px;
    padding-left: 2px;
    appearance: none;
    background-color: #003c00;
    border: 1px solid #9ad49a;
    color: #ffffd9;
    font: inherit;
}
.combo::after{
    content: "";
    position: absolute;
    top: 9px;
    right: 5px;
    border: 4px solid transparent;
    border-top-color: #ffffd9;
    border-bottom: none;
}
.snaps{
    display: flex;
}
.snaps button{
    width: 24px;
    height: 22px;
    margin-right: 1px;
}
.snaps .on{
    background-color: #cee6ec;
}
.update{
    width: 52px;
}
.two-rows, .view-rows{
    display: grid;
    grid-auto-flow: column;
    grid-template-rows: 22px 22px;
}
.two-rows{
    grid-template-columns: repeat(7, 25px) 44px 53px 54px repeat(5, 25px);
}
.two-rows .word, .two-rows .left{
    justify-content: flex-start;
    padding-left: 2px;
}
.swatch{
    width: 16px;
    height: 16px;
    place-self: center;
}
.white{
    background-color: #ffffff;
}
.green{
    background-color: #22b04c;
}
.red{
    background-color: #ec1c24;
}
.fit{
    margin-left: 14px;
}
.view-rows{
    grid-template-columns: 25px 25px 25px 12px 25px 12px;
}
.tail{
    align-self: flex-end;
    height: 20px;
    margin-left: 10px;
}

/* area de trabalho */
.work{
    display: flex;
    flex: 1;
    min-height: 0;
}
.curves{
    display: flex;
    flex-direction: column;
    width: 34px;
    padding-top: 5px;
}
.curves button{
    height: 33px;
}
.leftward{
    margin: auto 0 3px 4px;
}
.graphics{
    display: flex;
    flex: 1;
    flex-direction: column;
    min-width: 0;
}
.docs{
    display: flex;
    height: 23px;
    border-bottom: 2px solid #62a0b4;
    font-size: 12px;
}
.doc{
    display: flex;
    align-items: center;
    gap: 6px;
    padding-left: 3px;
    margin-right: 21px;
}
.doc span{
    margin-right: 2px;
}
.doc.active{
    gap: 5px;
    margin-right: 0;
    padding: 0 6px;
    background-color: #519fb8;
    color: #003c00;
}
.doc + .doc:not(.active){
    padding-left: 4px;
}
.canvas{
    flex: 1;
    min-height: 0;
    overflow: hidden;
    background-color: #000000;
    border: 1px solid #c0c0c0;
    border-top: none;
    border-right-width: 2px;
}
.scene{
    display: block;
    width: 100%;
    height: 100%;
}
.dots{
    fill: none;
    stroke: #a8a8a8;
}
.datum path{
    fill: none;
    stroke: #0000d0;
    stroke-width: 2px;
}
.datum .head{
    fill: #0000ff;
    stroke-width: 1px;
}
.datum text{
    fill: #0000e8;
    font-size: 14px;
}
.z{
    fill: #1448e0;
    font-size: 13px;
}
.y{
    fill: #3c8450;
    font-size: 13px;
}
.x{
    fill: #c83038;
    font-size: 13px;
}

/* navegador de pecas */
.navigator{
    position: relative;
    display: flex;
    width: 550px;
    font-size: 12px;
}
.nav-main{
    display: flex;
    flex: 1;
    flex-direction: column;
    min-width: 0;
    padding-left: 9px;
}
.nav-main h2{
    display: flex;
    align-items: center;
    gap: 11px;
    height: 30px;
    padding-left: 3px;
    font-size: 12px;
    font-weight: normal;
}
.pin{
    width: 12px;
    height: 11px;
    border: 1px solid #ffffd9;
    border-top-width: 2px;
}
.tree{
    width: calc(100% - 3px);
    margin-left: 2px;
    table-layout: fixed;
    border-collapse: separate;
    border-spacing: 0;
}
.c-mid{
    width: 100px;
}
.c-end{
    width: 7px;
}
.tree th, .tree td{
    height: 20px;
    padding-left: 6px;
    border-right: 1px solid #8cdcb0;
    border-bottom: 1px solid #8cdcb0;
    line-height: 16px;
    text-align: left;
    vertical-align: middle;
}
.tree th{
    height: 21px;
    font-weight: normal;
    border-color: #d4dcd4;
}
.tree th:last-child, .tree td:last-child{
    padding: 0;
    border-right: none;
}
.tree td:first-child{
    padding-left: 3px;
}
.tree tfoot td{
    height: 4px;
    border-bottom: none;
}
.tree .bold{
    font-weight: bold;
}
.tree td .icon{
    display: block;
}
.tree td .x12{
    margin-left: 1px;
}
.sort{
    display: inline-flex;
    margin-left: 18px;
    vertical-align: 3px;
}
.sort.caret::after{
    border-width: 5px;
    border-top: none;
}
.node{
    display: flex;
    align-items: center;
    gap: 1px;
    height: 19px;
}
.tree .branch{
    height: 20px;
}
.leaf{
    gap: 2px;
    padding-left: 19px;
}
.leaf input{
    appearance: none;
    width: 12px;
    height: 12px;
    background-color: #ffffff;
    border: 1px solid #000000;
}
.leaf input::after{
    content: "✔";
    display: block;
    color: #10a828;
    font: 11px/10px "DejaVu Sans", sans-serif;
}
.sections{
    margin-top: auto;
    padding-bottom: 5px;
}
.splitter{
    height: 5px;
    border: 1px solid #a8a8a8;
}
.section{
    justify-content: space-between;
    width: 100%;
    height: 24px;
    padding: 2px 8px 0;
    border-bottom: 2px solid #d0d0d0;
    color: #12607c;
    font-size: 13px;
}
.section i{
    width: 8px;
    height: 8px;
    margin-bottom: 6px;
    border: solid #12709c;
    border-width: 0 3px 3px 0;
    transform: rotate(45deg);
}
.rail{
    display: flex;
    flex-direction: column;
    width: 31px;
}
.rail button{
    flex: none;
    height: 34px;
}
.rail .gear{
    height: 26px;
    margin: 0 0 16px 7px;
}
.rail .current{
    width: 24px;
    margin-left: 4px;
    border: 1px solid #a8a8a8;
    border-left: none;
}
.rail .web{
    margin-top: 58px;
}
.rail .clock{
    margin-top: 12px;
}
.tip-browser{
    top: 195px;
    right: 0;
    width: 152px;
    height: 22px;
    padding-left: 4px;
    border-right: none;
    line-height: 20px;
}

/* rodape */
.status{
    position: relative;
    display: flex;
    align-items: center;
    justify-content: space-between;
    height: 23px;
    padding-left: 3px;
    border-top: 1px solid #a8a8a8;
    font-weight: bold;
}
.status-icons{
    display: flex;
    gap: 4px;
    margin-right: 56px;
}
.ime{
    position: absolute;
    bottom: 0;
    left: 469px;
    display: flex;
    align-items: center;
    gap: 8px;
    width: 178px;
    height: 26px;
    background-color: #fdfeff;
    color: #0a6fd8;
    font-size: 15px;
}
.ime svg{
    flex: none;
    width: 16px;
    height: 16px;
}
.ime .sogou{
    width: 32px;
    height: 30px;
    margin: 0 -2px 4px 0;
}
.meter{
    position: absolute;
    bottom: 1px;
    left: 647px;
    width: 34px;
    height: 7px;
    background-color: #8c8c8c;
    border: 1px solid #6c6c6c;
    border-radius: 0 4px 4px 0;
}
.meter i{
    display: block;
    width: 9px;
    height: 5px;
    background-color: #10d890;
}
```
